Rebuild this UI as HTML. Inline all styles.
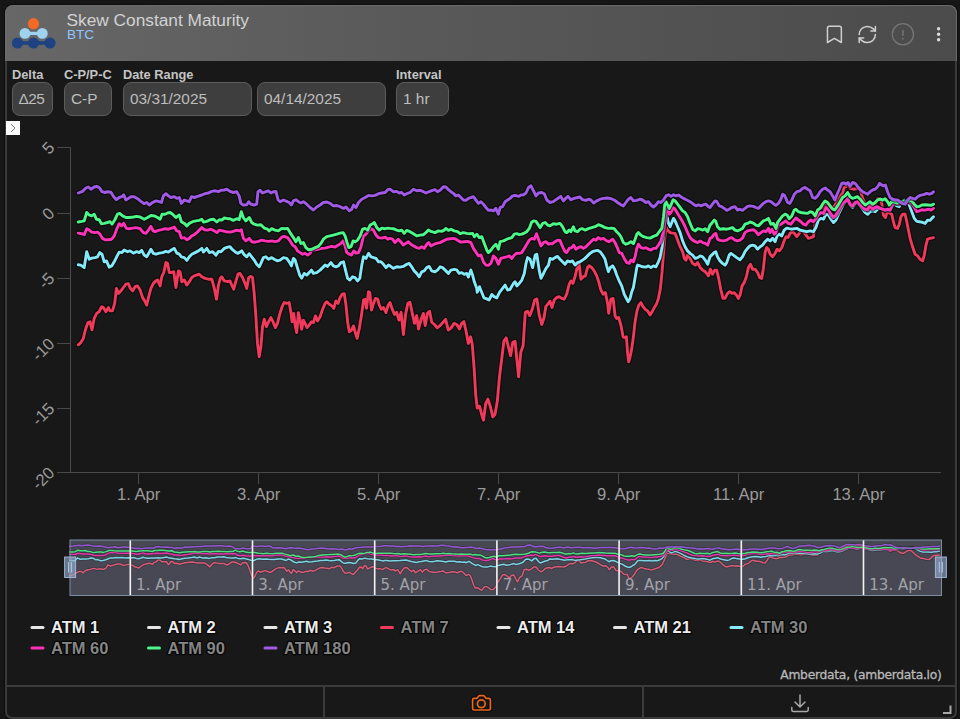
<!DOCTYPE html>
<html><head><meta charset="utf-8"><title>Skew Constant Maturity</title>
<style>
html,body{margin:0;padding:0;background:#161617;}
body{width:960px;height:719px;overflow:hidden;position:relative;font-family:"Liberation Sans",sans-serif;}
#panel{position:absolute;left:5px;top:5px;width:952px;height:714px;box-sizing:border-box;background:#181818;border:2px solid #3b3b3b;border-radius:8px 8px 7px 7px;box-shadow:0 0 0 1px #0c0c0c;}
#hdr{position:absolute;left:5px;top:5px;width:952px;height:55.6px;box-sizing:border-box;border-radius:8px 8px 0 0;border:1px solid #6c6c6c;border-bottom:none;background:linear-gradient(90deg,#676767 0%,#5a5a5a 40%,#4b4b4b 100%);}
#title{position:absolute;left:66.5px;top:10.2px;font-size:17.3px;color:#d2d2d2;line-height:20px;white-space:nowrap;}
#sub{position:absolute;left:67px;top:27.3px;font-size:13.5px;color:#8fc6ff;line-height:15px;}
.lbl{position:absolute;top:67.6px;font-size:12.8px;font-weight:bold;color:#c4c4c4;line-height:14px;white-space:nowrap;}
.btn{position:absolute;top:82.2px;height:33.5px;box-sizing:border-box;background:#3e3e3e;border:1px solid #5c5c5c;border-radius:8px;color:#bdbdbd;font-size:15.4px;line-height:32.4px;padding-left:6px;white-space:nowrap;}
#tog{position:absolute;left:6px;top:121px;width:14px;height:14px;background:#fafafa;}
svg{position:absolute;left:0;top:0;}
.ax{font-family:"Liberation Sans",sans-serif;font-size:16.6px;fill:#9a9a9a;}
.nv{font-family:"DejaVu Sans","Liberation Sans",sans-serif;font-size:15px;fill:#a2a2a8;}
.lg{font-family:"Liberation Sans",sans-serif;font-size:16.5px;font-weight:bold;}
</style></head><body>
<div id="panel"></div>
<div id="hdr"></div>
<div id="title">Skew Constant Maturity</div>
<div id="sub">BTC</div>
<div class="lbl" style="left:12px">Delta</div>
<div class="lbl" style="left:64px">C-P/P-C</div>
<div class="lbl" style="left:123px">Date Range</div>
<div class="lbl" style="left:396px">Interval</div>
<div class="btn" style="left:12px;width:41px;padding-left:5.5px;letter-spacing:-0.5px">Δ25</div>
<div class="btn" style="left:64px;width:48px">C-P</div>
<div class="btn" style="left:123px;width:129px">03/31/2025</div>
<div class="btn" style="left:257px;width:129px">04/14/2025</div>
<div class="btn" style="left:396px;width:53px">1 hr</div>
<div id="tog"></div>
<svg width="960" height="719" viewBox="0 0 960 719">
<!-- logo -->
<g>
<circle cx="17.5" cy="43" r="5.6" fill="#1f4382"/><circle cx="33.5" cy="43" r="5.6" fill="#1f4382"/><circle cx="50" cy="43" r="5.6" fill="#1f4382"/>
<rect x="17" y="41.2" width="33" height="3.6" fill="#1f4382"/>
<circle cx="25" cy="33.4" r="5.4" fill="#9fd2ee"/><circle cx="42.3" cy="33.4" r="5.4" fill="#9fd2ee"/>
<rect x="25" y="31.8" width="17" height="3.2" fill="#9fd2ee"/>
<circle cx="33.5" cy="23.7" r="5.6" fill="#f26a25"/>
</g>
<!-- header icons -->
<g fill="none" stroke="#cfcfcf" stroke-width="1.5" stroke-linejoin="round" stroke-linecap="round">
<path d="M827.45 42.5 V28.2 a2 2 0 0 1 2 -2 h9.9 a2 2 0 0 1 2 2 V42.5 l-6.95 -4.2 z"/>
<g transform="translate(856.5,23.7) scale(0.9)" stroke-width="1.67">
<path d="M3 12a9 9 0 0 1 9-9 9.75 9.75 0 0 1 6.74 2.74L21 8"/><path d="M21 3v5h-5"/><path d="M21 12a9 9 0 0 1-9 9 9.75 9.75 0 0 1-6.74-2.74L3 16"/><path d="M8 16H3v5"/>
</g>
</g>
<circle cx="902.9" cy="34.3" r="10.6" fill="none" stroke="#757575" stroke-width="1.3"/>
<path d="M902.9 30.2 v5.6 M902.9 38.1 v1.3" stroke="#757575" stroke-width="1.6" fill="none"/>
<circle cx="938.6" cy="28.8" r="1.7" fill="#dcdcdc"/><circle cx="938.6" cy="34.3" r="1.7" fill="#dcdcdc"/><circle cx="938.6" cy="39.8" r="1.7" fill="#dcdcdc"/>
<!-- toggle chevron -->
<path d="M11 124.2 l4 3.9 l-4 3.9" fill="none" stroke="#777" stroke-width="1"/>
<!-- axes -->
<g stroke="#4a4a4a" stroke-width="1" fill="none" shape-rendering="crispEdges">
<path d="M70.5 147 V473"/>
<path d="M57 147.5 H70 M57 213.5 H70 M57 278.5 H70 M57 343.5 H70 M57 408.5 H70 M57 472.5 H941"/>
<path d="M138.5 473 v11 M258.5 473 v11 M378.5 473 v11 M498.5 473 v11 M618.5 473 v11 M738.5 473 v11 M858.5 473 v11"/>
</g>
<g class="ax" text-anchor="end">
<text transform="translate(55.5,148.7) rotate(-45)">5</text>
<text transform="translate(55.5,214.5) rotate(-45)">0</text>
<text transform="translate(55.5,279.5) rotate(-45)">-5</text>
<text transform="translate(55.5,345.0) rotate(-45)">-10</text>
<text transform="translate(55.5,409.7) rotate(-45)">-15</text>
<text transform="translate(55.5,473.9) rotate(-45)">-20</text>
</g>
<g class="ax" text-anchor="middle">
<text x="138.7" y="499.5">1. Apr</text><text x="258.7" y="499.5">3. Apr</text><text x="378.7" y="499.5">5. Apr</text><text x="498.7" y="499.5">7. Apr</text><text x="618.7" y="499.5">9. Apr</text><text x="738.7" y="499.5">11. Apr</text><text x="858.7" y="499.5">13. Apr</text>
</g>
<!-- main series -->
<path d="M78.3 344.8 L80.8 342.6 L83.3 338.4 L85.8 328.4 L88.0 322.6 L90.0 321.8 L92.0 329.8 L94.2 318.4 L96.7 313.4 L99.2 311.7 L101.7 306.7 L103.4 307.6 L105.9 311.7 L108.4 307.6 L110.0 310.9 L112.5 310.9 L114.7 303.4 L116.4 288.4 L118.4 293.4 L120.9 290.9 L123.4 287.5 L125.9 284.2 L128.4 283.7 L130.4 288.4 L132.6 290.9 L135.1 286.7 L137.6 285.9 L140.1 290.1 L142.6 297.6 L144.7 300.9 L146.7 305.1 L148.7 296.7 L150.9 288.4 L153.4 283.4 L155.9 280.9 L157.6 280.0 L160.1 285.9 L161.8 276.7 L163.8 272.5 L165.9 262.5 L167.6 263.4 L169.3 272.5 L171.8 272.5 L173.8 271.7 L175.9 287.5 L178.4 270.9 L180.1 271.7 L181.8 281.7 L184.3 280.0 L186.8 285.0 L189.3 281.7 L191.8 277.5 L194.3 275.9 L196.8 275.0 L199.3 274.2 L201.8 276.7 L205.1 278.4 L208.5 279.2 L211.8 279.2 L214.3 288.4 L216.5 299.2 L218.5 285.0 L220.2 278.4 L221.8 276.7 L224.3 280.9 L227.7 281.7 L230.0 280.9 L231.7 285.0 L233.7 289.2 L235.8 281.7 L238.0 274.2 L240.0 273.4 L242.5 277.5 L245.0 283.4 L246.7 288.4 L248.7 277.5 L250.9 276.4 L252.5 277.5 L254.2 293.4 L255.9 316.7 L257.5 343.4 L259.2 356.8 L260.9 346.8 L262.5 326.7 L264.2 319.2 L266.4 326.7 L268.7 321.7 L270.9 317.6 L273.0 321.7 L275.4 327.6 L277.5 323.4 L279.7 314.2 L282.1 306.7 L284.2 302.6 L286.7 303.4 L289.2 302.6 L290.9 312.6 L292.1 321.7 L293.7 313.4 L295.4 326.7 L296.7 332.6 L298.4 312.6 L300.1 320.1 L301.7 329.2 L303.4 320.1 L305.1 323.4 L307.1 327.6 L309.2 325.1 L311.4 321.7 L313.4 322.6 L315.4 315.9 L317.6 320.9 L320.1 316.7 L322.6 309.2 L325.1 303.4 L326.8 301.7 L329.3 304.2 L331.8 305.9 L333.8 308.4 L335.9 300.9 L338.1 303.4 L340.1 297.5 L342.1 294.2 L344.3 293.7 L346.0 305.1 L347.6 321.7 L349.3 331.8 L351.5 330.1 L353.5 325.9 L355.5 333.4 L357.1 338.4 L359.3 328.4 L361.5 315.1 L363.5 300.1 L365.1 299.2 L366.5 308.4 L368.5 291.7 L369.8 292.5 L371.5 310.1 L373.5 303.4 L375.5 298.4 L377.7 299.2 L379.3 305.1 L381.5 309.2 L383.5 307.6 L386.0 312.6 L388.2 305.1 L390.0 302.6 L392.2 308.9 L394.5 314.5 L396.7 312.3 L398.9 320.1 L401.1 312.3 L403.4 334.5 L405.6 314.5 L407.8 303.4 L410.0 302.3 L412.3 313.4 L414.5 323.4 L416.7 315.6 L418.5 329.0 L421.2 319.0 L423.4 313.4 L425.2 325.6 L427.4 313.4 L429.6 311.2 L431.8 322.3 L434.5 324.5 L437.2 327.9 L440.1 325.6 L443.0 322.3 L445.6 319.4 L448.3 330.1 L451.2 327.9 L454.1 323.4 L456.8 324.5 L459.4 329.0 L461.7 323.4 L463.9 321.6 L466.1 331.2 L468.3 343.4 L470.6 336.8 L472.3 344.5 L474.1 367.9 L475.7 394.6 L477.2 408.0 L479.5 406.2 L481.7 414.6 L483.5 420.2 L485.7 403.5 L487.9 399.1 L490.1 405.7 L492.8 416.9 L495.0 414.6 L497.3 401.3 L499.5 376.8 L501.7 359.0 L503.9 341.2 L506.2 337.9 L508.4 346.8 L510.6 355.7 L512.8 342.3 L515.1 341.2 L516.8 359.0 L518.6 376.8 L520.8 352.3 L523.1 345.7 L525.3 312.3 L527.5 311.2 L529.7 315.6 L532.4 308.9 L534.6 300.0 L536.9 298.9 L539.1 314.5 L541.8 324.5 L544.0 317.8 L545.8 306.7 L548.4 303.4 L550.0 301.2 L552.0 307.6 L554.2 300.1 L556.7 297.5 L559.2 296.7 L561.7 298.4 L564.2 299.2 L566.7 294.2 L569.2 284.2 L570.9 280.9 L573.0 283.4 L575.0 276.7 L577.0 268.4 L579.2 264.2 L580.9 279.2 L583.4 276.7 L585.4 275.9 L587.5 267.5 L589.2 265.8 L591.7 267.5 L594.2 270.9 L596.7 275.9 L598.7 281.7 L600.9 290.0 L603.1 294.2 L605.4 292.5 L607.6 303.4 L608.7 313.4 L610.9 299.2 L613.1 298.4 L615.1 315.9 L616.7 318.4 L618.7 317.6 L620.9 325.1 L623.1 336.8 L625.1 337.6 L626.4 336.8 L627.6 353.4 L628.7 361.8 L630.1 356.8 L631.8 348.4 L633.4 336.8 L635.1 321.7 L636.8 311.7 L638.8 305.1 L640.9 302.6 L643.1 306.7 L645.1 309.2 L647.6 310.9 L650.1 315.1 L652.6 310.9 L654.8 306.7 L656.8 303.4 L658.4 298.4 L660.4 288.4 L662.1 271.7 L663.5 253.3 L664.8 238.4 L666.0 226.7 L667.6 230.1 L670.1 232.6 L672.6 233.1 L675.1 233.4 L677.6 240.1 L680.1 246.7 L682.6 251.7 L684.3 258.4 L686.0 260.1 L687.6 255.1 L690.1 258.4 L692.6 263.4 L695.2 265.1 L697.7 262.6 L700.2 267.6 L702.7 270.1 L705.2 271.8 L706.7 273.4 L708.4 275.9 L710.4 269.2 L712.5 274.2 L714.7 270.1 L716.7 270.1 L718.7 278.4 L720.9 290.1 L723.0 298.4 L725.0 298.4 L727.5 293.4 L729.7 291.7 L732.0 293.4 L734.2 292.6 L736.4 295.1 L738.4 298.4 L740.1 295.1 L742.1 285.9 L744.2 282.6 L746.4 276.7 L748.4 267.5 L750.4 264.2 L752.6 269.2 L755.1 269.2 L757.6 272.6 L759.7 277.6 L761.7 278.4 L763.4 268.4 L765.1 252.5 L766.7 247.5 L768.4 249.2 L770.1 254.2 L772.6 256.7 L775.1 253.4 L777.1 249.2 L779.3 250.9 L781.8 247.5 L783.8 241.7 L785.9 236.7 L788.1 237.5 L790.1 233.3 L792.1 231.7 L794.3 233.3 L796.8 236.7 L799.3 233.3 L801.4 230.0 L803.5 231.7 L806.0 235.0 L808.5 238.4 L811.0 237.5 L813.5 236.7 L814.8 225.0 L815.1 226.7 L816.8 218.4 L819.3 208.4 L820.9 206.7 L823.5 208.4 L826.0 205.0 L827.6 206.7 L830.1 208.4 L832.6 207.5 L835.1 205.0 L837.6 200.0 L840.1 195.9 L842.6 193.4 L844.0 187.5 L846.0 186.7 L847.6 183.3 L850.1 188.3 L853.5 189.2 L856.8 188.7 L859.3 188.0 L861.0 192.5 L862.7 198.4 L865.2 203.4 L867.7 207.5 L870.0 209.2 L872.6 208.4 L875.1 205.0 L877.6 198.4 L880.1 198.7 L881.8 203.4 L883.4 215.1 L885.4 217.6 L887.6 210.9 L890.1 213.4 L891.8 214.2 L893.4 221.7 L895.1 227.6 L897.6 228.4 L899.3 224.2 L900.9 216.7 L902.6 214.2 L905.1 214.2 L906.8 221.7 L908.4 230.1 L910.1 238.4 L912.6 246.8 L915.1 254.3 L917.6 255.9 L920.1 259.3 L922.6 260.9 L924.3 255.1 L926.0 245.1 L927.6 239.2 L930.1 238.4 L933.5 237.6" fill="none" stroke="#000" stroke-opacity=".55" stroke-width="5.2" stroke-linejoin="round" stroke-linecap="round"/>
<path d="M78.3 344.8 L80.8 342.6 L83.3 338.4 L85.8 328.4 L88.0 322.6 L90.0 321.8 L92.0 329.8 L94.2 318.4 L96.7 313.4 L99.2 311.7 L101.7 306.7 L103.4 307.6 L105.9 311.7 L108.4 307.6 L110.0 310.9 L112.5 310.9 L114.7 303.4 L116.4 288.4 L118.4 293.4 L120.9 290.9 L123.4 287.5 L125.9 284.2 L128.4 283.7 L130.4 288.4 L132.6 290.9 L135.1 286.7 L137.6 285.9 L140.1 290.1 L142.6 297.6 L144.7 300.9 L146.7 305.1 L148.7 296.7 L150.9 288.4 L153.4 283.4 L155.9 280.9 L157.6 280.0 L160.1 285.9 L161.8 276.7 L163.8 272.5 L165.9 262.5 L167.6 263.4 L169.3 272.5 L171.8 272.5 L173.8 271.7 L175.9 287.5 L178.4 270.9 L180.1 271.7 L181.8 281.7 L184.3 280.0 L186.8 285.0 L189.3 281.7 L191.8 277.5 L194.3 275.9 L196.8 275.0 L199.3 274.2 L201.8 276.7 L205.1 278.4 L208.5 279.2 L211.8 279.2 L214.3 288.4 L216.5 299.2 L218.5 285.0 L220.2 278.4 L221.8 276.7 L224.3 280.9 L227.7 281.7 L230.0 280.9 L231.7 285.0 L233.7 289.2 L235.8 281.7 L238.0 274.2 L240.0 273.4 L242.5 277.5 L245.0 283.4 L246.7 288.4 L248.7 277.5 L250.9 276.4 L252.5 277.5 L254.2 293.4 L255.9 316.7 L257.5 343.4 L259.2 356.8 L260.9 346.8 L262.5 326.7 L264.2 319.2 L266.4 326.7 L268.7 321.7 L270.9 317.6 L273.0 321.7 L275.4 327.6 L277.5 323.4 L279.7 314.2 L282.1 306.7 L284.2 302.6 L286.7 303.4 L289.2 302.6 L290.9 312.6 L292.1 321.7 L293.7 313.4 L295.4 326.7 L296.7 332.6 L298.4 312.6 L300.1 320.1 L301.7 329.2 L303.4 320.1 L305.1 323.4 L307.1 327.6 L309.2 325.1 L311.4 321.7 L313.4 322.6 L315.4 315.9 L317.6 320.9 L320.1 316.7 L322.6 309.2 L325.1 303.4 L326.8 301.7 L329.3 304.2 L331.8 305.9 L333.8 308.4 L335.9 300.9 L338.1 303.4 L340.1 297.5 L342.1 294.2 L344.3 293.7 L346.0 305.1 L347.6 321.7 L349.3 331.8 L351.5 330.1 L353.5 325.9 L355.5 333.4 L357.1 338.4 L359.3 328.4 L361.5 315.1 L363.5 300.1 L365.1 299.2 L366.5 308.4 L368.5 291.7 L369.8 292.5 L371.5 310.1 L373.5 303.4 L375.5 298.4 L377.7 299.2 L379.3 305.1 L381.5 309.2 L383.5 307.6 L386.0 312.6 L388.2 305.1 L390.0 302.6 L392.2 308.9 L394.5 314.5 L396.7 312.3 L398.9 320.1 L401.1 312.3 L403.4 334.5 L405.6 314.5 L407.8 303.4 L410.0 302.3 L412.3 313.4 L414.5 323.4 L416.7 315.6 L418.5 329.0 L421.2 319.0 L423.4 313.4 L425.2 325.6 L427.4 313.4 L429.6 311.2 L431.8 322.3 L434.5 324.5 L437.2 327.9 L440.1 325.6 L443.0 322.3 L445.6 319.4 L448.3 330.1 L451.2 327.9 L454.1 323.4 L456.8 324.5 L459.4 329.0 L461.7 323.4 L463.9 321.6 L466.1 331.2 L468.3 343.4 L470.6 336.8 L472.3 344.5 L474.1 367.9 L475.7 394.6 L477.2 408.0 L479.5 406.2 L481.7 414.6 L483.5 420.2 L485.7 403.5 L487.9 399.1 L490.1 405.7 L492.8 416.9 L495.0 414.6 L497.3 401.3 L499.5 376.8 L501.7 359.0 L503.9 341.2 L506.2 337.9 L508.4 346.8 L510.6 355.7 L512.8 342.3 L515.1 341.2 L516.8 359.0 L518.6 376.8 L520.8 352.3 L523.1 345.7 L525.3 312.3 L527.5 311.2 L529.7 315.6 L532.4 308.9 L534.6 300.0 L536.9 298.9 L539.1 314.5 L541.8 324.5 L544.0 317.8 L545.8 306.7 L548.4 303.4 L550.0 301.2 L552.0 307.6 L554.2 300.1 L556.7 297.5 L559.2 296.7 L561.7 298.4 L564.2 299.2 L566.7 294.2 L569.2 284.2 L570.9 280.9 L573.0 283.4 L575.0 276.7 L577.0 268.4 L579.2 264.2 L580.9 279.2 L583.4 276.7 L585.4 275.9 L587.5 267.5 L589.2 265.8 L591.7 267.5 L594.2 270.9 L596.7 275.9 L598.7 281.7 L600.9 290.0 L603.1 294.2 L605.4 292.5 L607.6 303.4 L608.7 313.4 L610.9 299.2 L613.1 298.4 L615.1 315.9 L616.7 318.4 L618.7 317.6 L620.9 325.1 L623.1 336.8 L625.1 337.6 L626.4 336.8 L627.6 353.4 L628.7 361.8 L630.1 356.8 L631.8 348.4 L633.4 336.8 L635.1 321.7 L636.8 311.7 L638.8 305.1 L640.9 302.6 L643.1 306.7 L645.1 309.2 L647.6 310.9 L650.1 315.1 L652.6 310.9 L654.8 306.7 L656.8 303.4 L658.4 298.4 L660.4 288.4 L662.1 271.7 L663.5 253.3 L664.8 238.4 L666.0 226.7 L667.6 230.1 L670.1 232.6 L672.6 233.1 L675.1 233.4 L677.6 240.1 L680.1 246.7 L682.6 251.7 L684.3 258.4 L686.0 260.1 L687.6 255.1 L690.1 258.4 L692.6 263.4 L695.2 265.1 L697.7 262.6 L700.2 267.6 L702.7 270.1 L705.2 271.8 L706.7 273.4 L708.4 275.9 L710.4 269.2 L712.5 274.2 L714.7 270.1 L716.7 270.1 L718.7 278.4 L720.9 290.1 L723.0 298.4 L725.0 298.4 L727.5 293.4 L729.7 291.7 L732.0 293.4 L734.2 292.6 L736.4 295.1 L738.4 298.4 L740.1 295.1 L742.1 285.9 L744.2 282.6 L746.4 276.7 L748.4 267.5 L750.4 264.2 L752.6 269.2 L755.1 269.2 L757.6 272.6 L759.7 277.6 L761.7 278.4 L763.4 268.4 L765.1 252.5 L766.7 247.5 L768.4 249.2 L770.1 254.2 L772.6 256.7 L775.1 253.4 L777.1 249.2 L779.3 250.9 L781.8 247.5 L783.8 241.7 L785.9 236.7 L788.1 237.5 L790.1 233.3 L792.1 231.7 L794.3 233.3 L796.8 236.7 L799.3 233.3 L801.4 230.0 L803.5 231.7 L806.0 235.0 L808.5 238.4 L811.0 237.5 L813.5 236.7 L814.8 225.0 L815.1 226.7 L816.8 218.4 L819.3 208.4 L820.9 206.7 L823.5 208.4 L826.0 205.0 L827.6 206.7 L830.1 208.4 L832.6 207.5 L835.1 205.0 L837.6 200.0 L840.1 195.9 L842.6 193.4 L844.0 187.5 L846.0 186.7 L847.6 183.3 L850.1 188.3 L853.5 189.2 L856.8 188.7 L859.3 188.0 L861.0 192.5 L862.7 198.4 L865.2 203.4 L867.7 207.5 L870.0 209.2 L872.6 208.4 L875.1 205.0 L877.6 198.4 L880.1 198.7 L881.8 203.4 L883.4 215.1 L885.4 217.6 L887.6 210.9 L890.1 213.4 L891.8 214.2 L893.4 221.7 L895.1 227.6 L897.6 228.4 L899.3 224.2 L900.9 216.7 L902.6 214.2 L905.1 214.2 L906.8 221.7 L908.4 230.1 L910.1 238.4 L912.6 246.8 L915.1 254.3 L917.6 255.9 L920.1 259.3 L922.6 260.9 L924.3 255.1 L926.0 245.1 L927.6 239.2 L930.1 238.4 L933.5 237.6" fill="none" stroke="#ef3a5b" stroke-width="2.9" stroke-linejoin="round" stroke-linecap="round"/>
<path d="M78.3 264.8 L80.8 265.1 L84.2 267.6 L86.7 251.7 L89.2 259.3 L91.7 258.1 L95.0 257.6 L97.5 256.8 L99.7 252.6 L102.0 254.2 L104.2 261.8 L106.4 260.9 L109.2 267.1 L111.7 265.9 L114.2 261.8 L116.7 256.8 L119.2 252.1 L121.7 252.6 L124.2 250.1 L127.6 251.7 L130.1 250.9 L133.4 253.1 L136.7 251.7 L139.2 252.6 L141.7 250.4 L144.2 255.1 L146.7 256.8 L149.2 252.6 L150.9 249.2 L153.4 253.4 L155.9 254.2 L159.3 253.1 L162.6 252.6 L165.9 251.4 L168.4 252.1 L171.8 249.7 L174.3 248.4 L176.8 253.1 L179.3 254.2 L181.4 256.8 L184.3 257.6 L186.8 260.4 L189.3 256.8 L191.8 254.2 L195.1 252.6 L198.5 250.9 L201.8 248.4 L203.5 252.1 L206.8 248.4 L209.3 252.6 L212.6 251.7 L216.0 255.1 L218.5 251.4 L221.0 251.7 L224.3 248.4 L227.7 247.1 L230.0 246.7 L232.5 249.7 L235.0 251.7 L237.5 253.4 L240.0 252.1 L241.7 250.9 L244.2 254.7 L246.7 256.8 L249.2 253.7 L251.7 256.8 L254.2 260.1 L256.7 264.3 L259.2 266.8 L260.9 263.4 L263.4 257.6 L265.9 256.8 L268.4 259.3 L271.7 257.6 L274.2 259.3 L277.5 260.9 L280.1 260.1 L283.4 257.6 L286.7 258.4 L289.2 261.8 L291.4 265.9 L293.4 258.4 L295.1 260.1 L297.6 268.4 L299.7 275.1 L301.7 278.1 L304.2 273.4 L306.7 275.1 L309.2 272.6 L311.4 270.1 L313.4 273.4 L316.8 272.6 L320.1 270.1 L322.6 267.6 L325.1 265.1 L327.6 266.4 L330.9 262.6 L333.4 265.9 L335.9 266.8 L338.4 265.9 L340.9 262.6 L343.5 261.8 L345.5 270.1 L347.6 278.4 L349.8 280.1 L352.6 276.8 L355.1 277.6 L357.6 280.9 L359.8 278.4 L361.8 265.1 L363.5 256.8 L366.0 258.4 L368.5 253.4 L371.0 256.8 L373.5 257.6 L376.0 258.4 L378.5 261.8 L381.0 261.8 L383.5 264.3 L386.0 267.6 L388.5 265.1 L390.0 265.9 L393.3 268.4 L396.7 266.8 L400.0 267.1 L403.3 266.4 L406.7 264.3 L409.2 263.4 L411.7 266.8 L414.2 270.9 L416.7 273.4 L419.2 276.8 L421.7 271.8 L424.2 270.9 L426.7 267.6 L429.2 266.4 L431.7 270.9 L435.0 271.8 L437.5 270.1 L440.1 266.8 L442.6 267.6 L445.9 270.9 L448.4 273.4 L450.9 270.1 L454.2 269.3 L456.7 269.8 L459.2 273.4 L461.7 272.6 L464.2 274.3 L466.7 273.4 L468.4 277.1 L470.9 270.1 L472.6 275.1 L474.3 281.8 L476.8 288.5 L477.2 292.3 L479.5 286.7 L481.7 292.3 L483.9 297.8 L486.8 298.9 L489.0 300.0 L491.9 294.5 L494.1 296.7 L496.8 297.8 L499.5 292.3 L505.1 285.1 L507.6 290.1 L510.1 289.3 L513.5 283.4 L515.1 281.8 L516.8 285.9 L519.3 283.4 L521.8 280.1 L524.3 273.4 L526.0 263.4 L527.6 257.6 L530.1 259.3 L532.6 267.6 L535.2 255.1 L536.8 254.2 L539.3 270.9 L541.0 278.4 L543.5 273.4 L546.0 268.4 L548.5 265.1 L550.0 258.4 L552.5 259.3 L555.0 257.6 L557.5 256.4 L560.0 259.3 L562.5 261.8 L565.0 264.3 L567.5 260.9 L570.0 261.8 L572.5 260.9 L575.0 265.1 L577.5 262.6 L580.0 261.8 L582.5 260.1 L585.0 258.4 L587.5 255.9 L590.0 253.4 L592.5 251.7 L595.0 250.9 L597.5 250.4 L600.1 251.7 L602.6 255.1 L605.1 259.3 L606.7 265.8 L608.4 271.7 L610.4 267.5 L612.6 265.8 L614.7 269.2 L616.7 275.0 L619.2 280.9 L621.7 285.9 L624.2 294.2 L625.9 297.5 L628.1 301.7 L630.1 298.4 L631.8 291.7 L633.4 287.5 L635.1 277.5 L636.8 267.5 L637.6 265.1 L640.1 265.9 L642.6 266.8 L645.9 267.1 L648.4 265.9 L650.9 267.6 L653.4 265.9 L655.9 266.8 L658.4 261.8 L660.1 257.6 L662.1 246.7 L663.8 231.7 L665.5 216.7 L666.8 215.0 L668.5 223.4 L670.1 226.7 L671.8 222.5 L673.5 218.4 L675.1 220.9 L677.6 226.7 L680.1 232.6 L682.6 240.9 L685.1 246.7 L687.6 250.9 L690.1 253.4 L692.6 255.1 L695.2 258.4 L697.7 257.6 L700.2 255.9 L702.7 256.8 L705.2 260.1 L707.7 264.3 L710.0 256.8 L711.7 255.1 L714.2 252.6 L715.8 251.7 L717.5 256.8 L720.0 260.9 L722.5 263.4 L725.0 265.1 L726.7 262.6 L729.2 255.1 L730.9 253.4 L733.4 255.1 L736.7 257.6 L740.0 259.8 L742.5 256.8 L745.0 251.7 L747.5 248.4 L750.0 245.9 L752.5 245.1 L755.0 245.9 L757.5 249.2 L760.1 246.7 L762.6 245.1 L765.1 241.7 L767.6 239.2 L770.1 240.9 L772.6 238.4 L775.1 241.7 L777.1 235.9 L779.2 234.2 L781.7 235.9 L784.2 230.1 L786.7 228.1 L789.2 228.7 L791.8 229.2 L794.3 228.7 L796.8 228.4 L800.1 230.1 L803.4 230.9 L806.8 231.7 L810.1 230.9 L813.4 231.7 L815.9 227.6 L818.4 220.0 L820.9 218.4 L823.5 219.2 L826.0 214.2 L828.5 215.0 L831.0 219.2 L833.5 222.5 L836.0 220.0 L838.5 214.2 L841.0 209.2 L843.5 204.2 L846.0 200.9 L847.6 200.0 L850.1 205.0 L852.6 207.5 L855.2 203.4 L857.7 202.5 L860.2 205.9 L862.7 209.2 L865.2 212.5 L867.7 214.2 L870.0 211.7 L872.6 210.9 L875.1 211.7 L877.6 209.2 L880.1 208.4 L882.6 209.2 L885.1 210.1 L887.6 209.7 L890.1 210.1 L891.8 206.7 L894.3 203.4 L896.8 205.9 L899.3 206.7 L901.8 201.7 L904.3 200.0 L906.8 200.9 L909.3 205.0 L911.8 211.7 L914.3 218.4 L916.8 221.4 L919.3 221.7 L921.8 222.1 L925.1 223.4 L927.6 220.1 L930.1 220.4 L931.8 218.4 L933.5 216.7" fill="none" stroke="#000" stroke-opacity=".55" stroke-width="5.2" stroke-linejoin="round" stroke-linecap="round"/>
<path d="M78.3 264.8 L80.8 265.1 L84.2 267.6 L86.7 251.7 L89.2 259.3 L91.7 258.1 L95.0 257.6 L97.5 256.8 L99.7 252.6 L102.0 254.2 L104.2 261.8 L106.4 260.9 L109.2 267.1 L111.7 265.9 L114.2 261.8 L116.7 256.8 L119.2 252.1 L121.7 252.6 L124.2 250.1 L127.6 251.7 L130.1 250.9 L133.4 253.1 L136.7 251.7 L139.2 252.6 L141.7 250.4 L144.2 255.1 L146.7 256.8 L149.2 252.6 L150.9 249.2 L153.4 253.4 L155.9 254.2 L159.3 253.1 L162.6 252.6 L165.9 251.4 L168.4 252.1 L171.8 249.7 L174.3 248.4 L176.8 253.1 L179.3 254.2 L181.4 256.8 L184.3 257.6 L186.8 260.4 L189.3 256.8 L191.8 254.2 L195.1 252.6 L198.5 250.9 L201.8 248.4 L203.5 252.1 L206.8 248.4 L209.3 252.6 L212.6 251.7 L216.0 255.1 L218.5 251.4 L221.0 251.7 L224.3 248.4 L227.7 247.1 L230.0 246.7 L232.5 249.7 L235.0 251.7 L237.5 253.4 L240.0 252.1 L241.7 250.9 L244.2 254.7 L246.7 256.8 L249.2 253.7 L251.7 256.8 L254.2 260.1 L256.7 264.3 L259.2 266.8 L260.9 263.4 L263.4 257.6 L265.9 256.8 L268.4 259.3 L271.7 257.6 L274.2 259.3 L277.5 260.9 L280.1 260.1 L283.4 257.6 L286.7 258.4 L289.2 261.8 L291.4 265.9 L293.4 258.4 L295.1 260.1 L297.6 268.4 L299.7 275.1 L301.7 278.1 L304.2 273.4 L306.7 275.1 L309.2 272.6 L311.4 270.1 L313.4 273.4 L316.8 272.6 L320.1 270.1 L322.6 267.6 L325.1 265.1 L327.6 266.4 L330.9 262.6 L333.4 265.9 L335.9 266.8 L338.4 265.9 L340.9 262.6 L343.5 261.8 L345.5 270.1 L347.6 278.4 L349.8 280.1 L352.6 276.8 L355.1 277.6 L357.6 280.9 L359.8 278.4 L361.8 265.1 L363.5 256.8 L366.0 258.4 L368.5 253.4 L371.0 256.8 L373.5 257.6 L376.0 258.4 L378.5 261.8 L381.0 261.8 L383.5 264.3 L386.0 267.6 L388.5 265.1 L390.0 265.9 L393.3 268.4 L396.7 266.8 L400.0 267.1 L403.3 266.4 L406.7 264.3 L409.2 263.4 L411.7 266.8 L414.2 270.9 L416.7 273.4 L419.2 276.8 L421.7 271.8 L424.2 270.9 L426.7 267.6 L429.2 266.4 L431.7 270.9 L435.0 271.8 L437.5 270.1 L440.1 266.8 L442.6 267.6 L445.9 270.9 L448.4 273.4 L450.9 270.1 L454.2 269.3 L456.7 269.8 L459.2 273.4 L461.7 272.6 L464.2 274.3 L466.7 273.4 L468.4 277.1 L470.9 270.1 L472.6 275.1 L474.3 281.8 L476.8 288.5 L477.2 292.3 L479.5 286.7 L481.7 292.3 L483.9 297.8 L486.8 298.9 L489.0 300.0 L491.9 294.5 L494.1 296.7 L496.8 297.8 L499.5 292.3 L505.1 285.1 L507.6 290.1 L510.1 289.3 L513.5 283.4 L515.1 281.8 L516.8 285.9 L519.3 283.4 L521.8 280.1 L524.3 273.4 L526.0 263.4 L527.6 257.6 L530.1 259.3 L532.6 267.6 L535.2 255.1 L536.8 254.2 L539.3 270.9 L541.0 278.4 L543.5 273.4 L546.0 268.4 L548.5 265.1 L550.0 258.4 L552.5 259.3 L555.0 257.6 L557.5 256.4 L560.0 259.3 L562.5 261.8 L565.0 264.3 L567.5 260.9 L570.0 261.8 L572.5 260.9 L575.0 265.1 L577.5 262.6 L580.0 261.8 L582.5 260.1 L585.0 258.4 L587.5 255.9 L590.0 253.4 L592.5 251.7 L595.0 250.9 L597.5 250.4 L600.1 251.7 L602.6 255.1 L605.1 259.3 L606.7 265.8 L608.4 271.7 L610.4 267.5 L612.6 265.8 L614.7 269.2 L616.7 275.0 L619.2 280.9 L621.7 285.9 L624.2 294.2 L625.9 297.5 L628.1 301.7 L630.1 298.4 L631.8 291.7 L633.4 287.5 L635.1 277.5 L636.8 267.5 L637.6 265.1 L640.1 265.9 L642.6 266.8 L645.9 267.1 L648.4 265.9 L650.9 267.6 L653.4 265.9 L655.9 266.8 L658.4 261.8 L660.1 257.6 L662.1 246.7 L663.8 231.7 L665.5 216.7 L666.8 215.0 L668.5 223.4 L670.1 226.7 L671.8 222.5 L673.5 218.4 L675.1 220.9 L677.6 226.7 L680.1 232.6 L682.6 240.9 L685.1 246.7 L687.6 250.9 L690.1 253.4 L692.6 255.1 L695.2 258.4 L697.7 257.6 L700.2 255.9 L702.7 256.8 L705.2 260.1 L707.7 264.3 L710.0 256.8 L711.7 255.1 L714.2 252.6 L715.8 251.7 L717.5 256.8 L720.0 260.9 L722.5 263.4 L725.0 265.1 L726.7 262.6 L729.2 255.1 L730.9 253.4 L733.4 255.1 L736.7 257.6 L740.0 259.8 L742.5 256.8 L745.0 251.7 L747.5 248.4 L750.0 245.9 L752.5 245.1 L755.0 245.9 L757.5 249.2 L760.1 246.7 L762.6 245.1 L765.1 241.7 L767.6 239.2 L770.1 240.9 L772.6 238.4 L775.1 241.7 L777.1 235.9 L779.2 234.2 L781.7 235.9 L784.2 230.1 L786.7 228.1 L789.2 228.7 L791.8 229.2 L794.3 228.7 L796.8 228.4 L800.1 230.1 L803.4 230.9 L806.8 231.7 L810.1 230.9 L813.4 231.7 L815.9 227.6 L818.4 220.0 L820.9 218.4 L823.5 219.2 L826.0 214.2 L828.5 215.0 L831.0 219.2 L833.5 222.5 L836.0 220.0 L838.5 214.2 L841.0 209.2 L843.5 204.2 L846.0 200.9 L847.6 200.0 L850.1 205.0 L852.6 207.5 L855.2 203.4 L857.7 202.5 L860.2 205.9 L862.7 209.2 L865.2 212.5 L867.7 214.2 L870.0 211.7 L872.6 210.9 L875.1 211.7 L877.6 209.2 L880.1 208.4 L882.6 209.2 L885.1 210.1 L887.6 209.7 L890.1 210.1 L891.8 206.7 L894.3 203.4 L896.8 205.9 L899.3 206.7 L901.8 201.7 L904.3 200.0 L906.8 200.9 L909.3 205.0 L911.8 211.7 L914.3 218.4 L916.8 221.4 L919.3 221.7 L921.8 222.1 L925.1 223.4 L927.6 220.1 L930.1 220.4 L931.8 218.4 L933.5 216.7" fill="none" stroke="#84e9f9" stroke-width="2.9" stroke-linejoin="round" stroke-linecap="round"/>
<path d="M78.3 233.1 L81.7 233.7 L84.2 234.7 L86.7 228.7 L89.2 230.1 L91.7 232.1 L95.0 232.6 L97.5 232.1 L100.0 234.2 L102.5 238.4 L105.0 239.7 L108.4 239.7 L111.7 239.2 L114.2 235.9 L116.7 229.2 L119.2 223.7 L121.7 225.9 L123.7 223.4 L126.4 228.4 L129.2 228.7 L132.6 228.1 L135.9 227.6 L140.1 228.7 L143.4 232.6 L145.9 233.4 L148.4 230.1 L150.9 226.4 L153.1 230.9 L155.1 231.7 L158.4 230.4 L161.8 229.7 L165.1 228.7 L168.4 229.2 L171.8 228.1 L174.3 227.1 L176.8 230.9 L179.3 231.7 L181.4 238.1 L184.3 237.6 L186.8 239.7 L189.3 238.4 L191.8 235.9 L194.3 234.7 L196.8 232.6 L199.3 230.1 L201.8 227.6 L204.3 229.7 L207.6 230.1 L211.0 229.2 L214.3 230.9 L216.8 232.6 L219.3 230.1 L222.7 230.9 L226.0 231.7 L230.0 232.1 L233.3 231.4 L236.7 230.1 L239.2 230.9 L241.3 229.7 L243.3 238.1 L245.8 240.9 L249.2 238.4 L251.7 241.7 L255.0 242.2 L258.4 241.4 L261.7 240.1 L265.0 240.9 L268.4 241.4 L271.7 240.9 L275.0 241.7 L278.4 240.9 L281.7 237.1 L284.2 236.4 L287.6 237.6 L290.1 240.9 L292.6 245.1 L295.1 246.7 L297.6 250.9 L300.1 252.6 L302.6 254.2 L305.1 253.4 L307.6 255.1 L310.1 253.4 L311.8 250.1 L315.1 249.7 L318.4 249.2 L321.8 248.4 L325.1 248.1 L328.4 247.1 L331.8 246.4 L335.1 247.1 L338.4 245.1 L340.9 243.4 L343.1 240.9 L344.8 245.1 L346.8 252.6 L349.3 254.2 L351.5 255.1 L353.8 250.9 L356.0 253.1 L358.5 252.6 L361.0 246.7 L363.5 235.9 L366.0 234.2 L368.5 230.9 L371.0 228.4 L373.5 230.1 L376.0 235.1 L378.5 237.6 L381.8 238.1 L385.2 237.1 L387.7 239.2 L390.0 238.4 L392.5 239.2 L395.0 242.6 L398.3 239.2 L400.8 241.7 L403.3 245.1 L405.8 243.4 L408.4 241.7 L410.9 244.2 L413.4 245.9 L416.7 247.6 L419.2 248.4 L421.7 246.7 L424.2 248.4 L426.7 244.2 L428.7 242.6 L430.9 245.9 L434.2 244.2 L437.5 243.1 L440.1 242.6 L443.4 240.9 L446.7 239.2 L450.1 238.7 L453.4 238.4 L455.9 239.2 L458.4 240.9 L460.9 242.1 L464.2 241.7 L467.6 241.4 L470.9 242.6 L473.4 248.4 L475.9 252.1 L478.4 255.9 L480.9 255.1 L483.4 261.8 L485.9 265.1 L488.4 265.4 L490.9 263.4 L493.4 255.9 L495.9 258.4 L498.4 264.3 L500.9 258.4 L503.5 257.6 L506.8 256.8 L509.3 255.9 L511.8 258.4 L514.3 255.1 L516.8 253.1 L519.3 253.4 L521.8 252.6 L524.3 248.4 L526.8 244.2 L529.3 240.1 L531.8 238.4 L534.3 239.2 L536.5 233.7 L538.5 239.2 L541.0 245.9 L543.5 242.6 L546.0 241.7 L548.5 244.2 L550.0 243.7 L552.5 243.7 L555.0 241.7 L557.5 240.1 L560.0 240.4 L562.5 246.7 L565.0 251.7 L566.7 252.6 L569.2 248.4 L571.7 247.6 L573.7 245.1 L575.9 249.2 L578.4 247.6 L580.9 246.7 L583.4 248.4 L585.9 246.7 L588.4 244.2 L590.9 241.7 L593.4 239.2 L595.9 240.1 L598.4 237.6 L600.9 239.2 L603.4 238.4 L606.7 240.9 L609.2 241.7 L612.6 239.2 L615.1 242.6 L617.6 248.4 L619.2 252.6 L621.7 253.4 L624.2 258.4 L626.7 262.6 L629.2 263.4 L630.9 260.1 L633.4 261.8 L635.1 256.8 L636.8 248.4 L638.4 244.2 L640.9 247.6 L643.4 248.4 L645.9 247.6 L648.4 249.2 L650.9 250.1 L653.4 248.4 L655.9 248.4 L658.4 245.1 L660.9 240.9 L663.1 232.6 L664.8 221.7 L666.0 211.7 L667.6 208.4 L669.3 214.2 L671.0 212.5 L673.1 207.5 L675.1 209.2 L677.6 213.4 L680.1 217.5 L682.6 221.7 L685.1 226.7 L687.6 232.6 L690.1 237.6 L692.6 240.1 L695.2 241.7 L697.7 242.6 L700.2 240.9 L702.7 242.6 L705.2 243.4 L707.7 245.1 L710.0 238.4 L711.7 237.6 L714.2 234.2 L715.8 233.4 L717.5 239.2 L720.0 240.4 L723.3 240.9 L726.7 240.1 L729.2 238.4 L731.7 237.6 L735.0 240.1 L737.5 240.9 L740.0 240.1 L742.5 238.1 L745.0 232.6 L747.5 230.9 L750.9 230.1 L753.4 229.7 L755.9 231.7 L758.4 234.7 L760.9 232.6 L763.4 230.9 L765.9 231.7 L768.4 228.4 L770.1 232.6 L772.1 229.2 L774.2 234.2 L775.9 232.6 L778.4 225.1 L780.9 224.2 L783.4 222.5 L785.9 220.9 L788.4 223.4 L790.9 224.2 L793.4 220.9 L795.9 218.0 L798.4 220.0 L800.9 221.7 L803.4 224.2 L805.9 225.1 L808.4 221.7 L810.9 220.0 L813.4 221.7 L815.9 218.4 L818.4 215.0 L820.9 212.5 L823.5 213.4 L826.0 207.5 L828.5 210.0 L831.0 214.2 L833.5 217.5 L836.0 215.0 L838.5 210.0 L841.0 205.9 L843.5 202.5 L846.0 200.9 L847.6 198.4 L850.1 204.2 L852.6 205.9 L855.2 202.5 L857.7 201.7 L860.2 205.0 L862.7 207.5 L865.2 209.2 L867.7 210.0 L870.0 205.0 L872.6 209.2 L875.1 207.5 L877.6 206.7 L880.1 208.4 L882.6 209.2 L885.1 210.1 L887.6 209.2 L890.1 210.1 L891.8 205.9 L894.3 202.5 L896.8 203.4 L899.3 203.7 L901.8 203.0 L904.3 201.7 L906.8 201.4 L909.3 201.7 L911.8 203.4 L914.3 207.5 L916.8 211.7 L919.3 210.9 L921.8 209.7 L925.1 210.1 L928.5 209.2 L931.0 210.1 L933.5 208.4" fill="none" stroke="#000" stroke-opacity=".55" stroke-width="5.2" stroke-linejoin="round" stroke-linecap="round"/>
<path d="M78.3 233.1 L81.7 233.7 L84.2 234.7 L86.7 228.7 L89.2 230.1 L91.7 232.1 L95.0 232.6 L97.5 232.1 L100.0 234.2 L102.5 238.4 L105.0 239.7 L108.4 239.7 L111.7 239.2 L114.2 235.9 L116.7 229.2 L119.2 223.7 L121.7 225.9 L123.7 223.4 L126.4 228.4 L129.2 228.7 L132.6 228.1 L135.9 227.6 L140.1 228.7 L143.4 232.6 L145.9 233.4 L148.4 230.1 L150.9 226.4 L153.1 230.9 L155.1 231.7 L158.4 230.4 L161.8 229.7 L165.1 228.7 L168.4 229.2 L171.8 228.1 L174.3 227.1 L176.8 230.9 L179.3 231.7 L181.4 238.1 L184.3 237.6 L186.8 239.7 L189.3 238.4 L191.8 235.9 L194.3 234.7 L196.8 232.6 L199.3 230.1 L201.8 227.6 L204.3 229.7 L207.6 230.1 L211.0 229.2 L214.3 230.9 L216.8 232.6 L219.3 230.1 L222.7 230.9 L226.0 231.7 L230.0 232.1 L233.3 231.4 L236.7 230.1 L239.2 230.9 L241.3 229.7 L243.3 238.1 L245.8 240.9 L249.2 238.4 L251.7 241.7 L255.0 242.2 L258.4 241.4 L261.7 240.1 L265.0 240.9 L268.4 241.4 L271.7 240.9 L275.0 241.7 L278.4 240.9 L281.7 237.1 L284.2 236.4 L287.6 237.6 L290.1 240.9 L292.6 245.1 L295.1 246.7 L297.6 250.9 L300.1 252.6 L302.6 254.2 L305.1 253.4 L307.6 255.1 L310.1 253.4 L311.8 250.1 L315.1 249.7 L318.4 249.2 L321.8 248.4 L325.1 248.1 L328.4 247.1 L331.8 246.4 L335.1 247.1 L338.4 245.1 L340.9 243.4 L343.1 240.9 L344.8 245.1 L346.8 252.6 L349.3 254.2 L351.5 255.1 L353.8 250.9 L356.0 253.1 L358.5 252.6 L361.0 246.7 L363.5 235.9 L366.0 234.2 L368.5 230.9 L371.0 228.4 L373.5 230.1 L376.0 235.1 L378.5 237.6 L381.8 238.1 L385.2 237.1 L387.7 239.2 L390.0 238.4 L392.5 239.2 L395.0 242.6 L398.3 239.2 L400.8 241.7 L403.3 245.1 L405.8 243.4 L408.4 241.7 L410.9 244.2 L413.4 245.9 L416.7 247.6 L419.2 248.4 L421.7 246.7 L424.2 248.4 L426.7 244.2 L428.7 242.6 L430.9 245.9 L434.2 244.2 L437.5 243.1 L440.1 242.6 L443.4 240.9 L446.7 239.2 L450.1 238.7 L453.4 238.4 L455.9 239.2 L458.4 240.9 L460.9 242.1 L464.2 241.7 L467.6 241.4 L470.9 242.6 L473.4 248.4 L475.9 252.1 L478.4 255.9 L480.9 255.1 L483.4 261.8 L485.9 265.1 L488.4 265.4 L490.9 263.4 L493.4 255.9 L495.9 258.4 L498.4 264.3 L500.9 258.4 L503.5 257.6 L506.8 256.8 L509.3 255.9 L511.8 258.4 L514.3 255.1 L516.8 253.1 L519.3 253.4 L521.8 252.6 L524.3 248.4 L526.8 244.2 L529.3 240.1 L531.8 238.4 L534.3 239.2 L536.5 233.7 L538.5 239.2 L541.0 245.9 L543.5 242.6 L546.0 241.7 L548.5 244.2 L550.0 243.7 L552.5 243.7 L555.0 241.7 L557.5 240.1 L560.0 240.4 L562.5 246.7 L565.0 251.7 L566.7 252.6 L569.2 248.4 L571.7 247.6 L573.7 245.1 L575.9 249.2 L578.4 247.6 L580.9 246.7 L583.4 248.4 L585.9 246.7 L588.4 244.2 L590.9 241.7 L593.4 239.2 L595.9 240.1 L598.4 237.6 L600.9 239.2 L603.4 238.4 L606.7 240.9 L609.2 241.7 L612.6 239.2 L615.1 242.6 L617.6 248.4 L619.2 252.6 L621.7 253.4 L624.2 258.4 L626.7 262.6 L629.2 263.4 L630.9 260.1 L633.4 261.8 L635.1 256.8 L636.8 248.4 L638.4 244.2 L640.9 247.6 L643.4 248.4 L645.9 247.6 L648.4 249.2 L650.9 250.1 L653.4 248.4 L655.9 248.4 L658.4 245.1 L660.9 240.9 L663.1 232.6 L664.8 221.7 L666.0 211.7 L667.6 208.4 L669.3 214.2 L671.0 212.5 L673.1 207.5 L675.1 209.2 L677.6 213.4 L680.1 217.5 L682.6 221.7 L685.1 226.7 L687.6 232.6 L690.1 237.6 L692.6 240.1 L695.2 241.7 L697.7 242.6 L700.2 240.9 L702.7 242.6 L705.2 243.4 L707.7 245.1 L710.0 238.4 L711.7 237.6 L714.2 234.2 L715.8 233.4 L717.5 239.2 L720.0 240.4 L723.3 240.9 L726.7 240.1 L729.2 238.4 L731.7 237.6 L735.0 240.1 L737.5 240.9 L740.0 240.1 L742.5 238.1 L745.0 232.6 L747.5 230.9 L750.9 230.1 L753.4 229.7 L755.9 231.7 L758.4 234.7 L760.9 232.6 L763.4 230.9 L765.9 231.7 L768.4 228.4 L770.1 232.6 L772.1 229.2 L774.2 234.2 L775.9 232.6 L778.4 225.1 L780.9 224.2 L783.4 222.5 L785.9 220.9 L788.4 223.4 L790.9 224.2 L793.4 220.9 L795.9 218.0 L798.4 220.0 L800.9 221.7 L803.4 224.2 L805.9 225.1 L808.4 221.7 L810.9 220.0 L813.4 221.7 L815.9 218.4 L818.4 215.0 L820.9 212.5 L823.5 213.4 L826.0 207.5 L828.5 210.0 L831.0 214.2 L833.5 217.5 L836.0 215.0 L838.5 210.0 L841.0 205.9 L843.5 202.5 L846.0 200.9 L847.6 198.4 L850.1 204.2 L852.6 205.9 L855.2 202.5 L857.7 201.7 L860.2 205.0 L862.7 207.5 L865.2 209.2 L867.7 210.0 L870.0 205.0 L872.6 209.2 L875.1 207.5 L877.6 206.7 L880.1 208.4 L882.6 209.2 L885.1 210.1 L887.6 209.2 L890.1 210.1 L891.8 205.9 L894.3 202.5 L896.8 203.4 L899.3 203.7 L901.8 203.0 L904.3 201.7 L906.8 201.4 L909.3 201.7 L911.8 203.4 L914.3 207.5 L916.8 211.7 L919.3 210.9 L921.8 209.7 L925.1 210.1 L928.5 209.2 L931.0 210.1 L933.5 208.4" fill="none" stroke="#ff33b8" stroke-width="2.9" stroke-linejoin="round" stroke-linecap="round"/>
<path d="M78.3 222.0 L81.7 221.4 L84.2 220.9 L86.7 212.5 L89.2 215.0 L91.7 215.9 L94.2 214.2 L96.4 219.2 L99.2 219.7 L101.4 223.7 L104.2 223.4 L107.5 222.5 L110.0 221.7 L112.0 224.2 L114.7 220.0 L117.5 214.2 L119.7 213.4 L122.6 215.9 L125.9 217.5 L129.2 217.5 L133.4 217.0 L136.7 216.4 L140.1 217.0 L144.2 219.2 L147.6 217.5 L150.9 215.5 L154.3 215.9 L157.6 217.5 L160.1 219.2 L162.1 214.2 L165.1 214.2 L167.6 213.0 L170.1 212.5 L172.6 214.2 L175.9 217.5 L179.3 215.0 L181.4 221.7 L184.3 223.4 L186.8 225.9 L189.3 223.4 L192.6 221.7 L196.0 220.9 L199.3 220.4 L201.8 219.2 L203.5 222.0 L206.8 221.4 L210.1 219.7 L213.5 219.2 L216.8 222.0 L219.3 219.7 L221.8 220.0 L224.3 218.0 L227.7 218.7 L230.0 218.7 L233.3 220.4 L236.7 218.7 L239.2 219.7 L241.3 211.7 L243.3 217.5 L245.8 220.9 L249.2 217.5 L251.7 222.5 L254.2 224.2 L257.5 225.1 L260.9 224.7 L264.2 228.1 L267.5 229.2 L269.2 230.9 L271.7 228.7 L275.0 230.1 L278.4 230.9 L281.7 228.4 L285.1 228.7 L287.6 228.4 L290.1 232.6 L293.4 237.6 L295.9 241.7 L298.4 237.6 L300.9 243.4 L303.4 242.6 L305.9 247.6 L308.4 249.7 L311.8 249.2 L315.1 247.6 L318.4 246.4 L320.9 243.4 L323.4 239.2 L326.8 236.7 L330.1 235.9 L333.4 235.1 L336.8 234.2 L340.1 233.1 L343.1 232.6 L345.1 235.9 L346.8 241.7 L348.8 247.6 L351.0 246.7 L353.1 240.9 L355.1 241.7 L357.6 240.1 L360.1 235.9 L362.6 229.2 L365.1 228.4 L367.6 230.1 L370.1 225.1 L372.6 223.7 L374.3 222.5 L376.8 227.6 L379.3 230.1 L381.8 228.1 L385.2 228.7 L387.7 228.1 L390.0 228.4 L393.3 228.7 L396.7 230.1 L399.2 230.9 L401.7 230.1 L404.2 233.4 L406.7 230.4 L410.0 231.7 L413.4 233.7 L416.7 235.9 L420.0 235.1 L423.4 234.7 L425.9 232.6 L428.4 230.1 L431.7 231.7 L435.0 232.6 L438.4 230.9 L441.7 231.4 L444.2 230.1 L445.9 228.4 L448.4 230.4 L450.9 229.2 L454.2 230.9 L457.6 231.7 L460.1 233.7 L463.4 232.6 L466.7 233.4 L470.1 233.7 L472.6 233.4 L474.3 236.7 L476.8 234.2 L479.3 237.6 L481.8 236.7 L484.3 243.4 L486.8 250.1 L488.4 252.6 L490.9 250.1 L493.4 246.7 L495.9 244.2 L498.4 249.2 L500.1 241.7 L503.5 240.9 L506.8 239.2 L509.3 238.4 L511.8 237.6 L514.3 234.2 L516.8 233.7 L519.3 234.7 L521.8 234.2 L524.3 233.1 L526.8 231.7 L529.3 228.4 L531.5 222.5 L533.5 220.9 L536.0 221.4 L538.5 225.1 L540.2 227.6 L542.7 223.4 L545.2 222.5 L547.7 225.1 L550.0 225.9 L553.3 223.7 L556.7 224.2 L560.0 223.4 L562.5 226.7 L565.0 231.7 L566.7 232.6 L569.2 230.1 L570.9 231.7 L573.4 226.7 L575.0 230.9 L577.5 231.7 L580.0 229.2 L582.5 228.7 L585.0 230.1 L588.4 228.7 L591.7 227.6 L595.0 226.7 L598.4 224.7 L601.7 225.9 L605.1 227.6 L608.4 228.4 L611.7 228.1 L614.2 228.7 L616.7 231.7 L619.2 234.2 L620.9 236.7 L623.4 242.6 L625.9 244.2 L628.4 243.4 L630.9 241.7 L633.4 243.7 L635.1 239.2 L636.8 234.2 L638.4 232.6 L640.9 235.1 L643.4 236.7 L646.8 237.6 L650.1 238.1 L653.4 236.4 L656.8 235.1 L659.3 231.7 L661.8 228.4 L663.5 216.7 L664.8 204.2 L666.0 201.7 L667.6 205.0 L669.3 208.4 L671.0 205.0 L673.1 199.7 L675.1 200.9 L677.6 204.2 L680.1 207.5 L682.6 210.9 L685.1 212.5 L687.6 216.7 L690.1 223.4 L692.6 229.2 L695.2 230.9 L697.7 228.7 L700.2 229.2 L702.7 230.1 L705.2 228.7 L707.7 231.7 L710.0 225.1 L711.7 223.4 L714.2 220.0 L715.8 221.4 L717.5 226.7 L720.0 229.2 L723.3 228.7 L726.7 229.2 L730.0 228.4 L732.5 227.6 L735.0 230.1 L737.5 230.9 L740.0 229.7 L742.5 228.4 L745.0 224.2 L747.5 223.4 L750.0 222.0 L753.4 223.1 L755.9 225.1 L758.4 225.9 L760.9 223.4 L763.4 220.9 L765.9 220.0 L768.4 218.4 L770.9 224.2 L773.4 223.4 L775.9 228.4 L777.6 222.5 L780.1 219.2 L782.6 215.9 L785.1 214.2 L787.1 215.0 L789.2 218.7 L791.8 215.9 L794.3 210.0 L795.9 209.2 L798.4 211.7 L800.9 212.5 L804.3 213.0 L807.6 213.4 L810.1 211.7 L812.6 212.5 L815.1 215.9 L817.6 210.0 L820.1 208.4 L822.6 204.2 L825.1 200.9 L827.6 202.5 L830.1 205.9 L832.6 209.2 L834.8 210.0 L837.6 205.9 L840.1 201.7 L842.6 197.5 L845.1 195.9 L847.6 192.5 L850.1 196.7 L852.6 198.4 L855.2 197.5 L857.7 196.7 L860.2 199.2 L862.7 202.5 L865.2 205.0 L867.7 203.4 L870.0 201.7 L872.6 204.2 L875.1 202.5 L877.6 200.0 L880.1 199.2 L882.6 200.0 L885.1 198.7 L887.6 201.7 L889.3 205.0 L891.8 201.4 L894.3 202.0 L896.8 203.0 L899.3 202.5 L901.8 201.7 L904.3 200.9 L906.8 201.7 L909.3 200.9 L911.8 200.9 L914.3 204.2 L916.8 206.7 L919.3 206.4 L921.8 205.0 L925.1 204.7 L928.5 205.0 L931.0 205.4 L933.5 204.2" fill="none" stroke="#000" stroke-opacity=".55" stroke-width="5.2" stroke-linejoin="round" stroke-linecap="round"/>
<path d="M78.3 222.0 L81.7 221.4 L84.2 220.9 L86.7 212.5 L89.2 215.0 L91.7 215.9 L94.2 214.2 L96.4 219.2 L99.2 219.7 L101.4 223.7 L104.2 223.4 L107.5 222.5 L110.0 221.7 L112.0 224.2 L114.7 220.0 L117.5 214.2 L119.7 213.4 L122.6 215.9 L125.9 217.5 L129.2 217.5 L133.4 217.0 L136.7 216.4 L140.1 217.0 L144.2 219.2 L147.6 217.5 L150.9 215.5 L154.3 215.9 L157.6 217.5 L160.1 219.2 L162.1 214.2 L165.1 214.2 L167.6 213.0 L170.1 212.5 L172.6 214.2 L175.9 217.5 L179.3 215.0 L181.4 221.7 L184.3 223.4 L186.8 225.9 L189.3 223.4 L192.6 221.7 L196.0 220.9 L199.3 220.4 L201.8 219.2 L203.5 222.0 L206.8 221.4 L210.1 219.7 L213.5 219.2 L216.8 222.0 L219.3 219.7 L221.8 220.0 L224.3 218.0 L227.7 218.7 L230.0 218.7 L233.3 220.4 L236.7 218.7 L239.2 219.7 L241.3 211.7 L243.3 217.5 L245.8 220.9 L249.2 217.5 L251.7 222.5 L254.2 224.2 L257.5 225.1 L260.9 224.7 L264.2 228.1 L267.5 229.2 L269.2 230.9 L271.7 228.7 L275.0 230.1 L278.4 230.9 L281.7 228.4 L285.1 228.7 L287.6 228.4 L290.1 232.6 L293.4 237.6 L295.9 241.7 L298.4 237.6 L300.9 243.4 L303.4 242.6 L305.9 247.6 L308.4 249.7 L311.8 249.2 L315.1 247.6 L318.4 246.4 L320.9 243.4 L323.4 239.2 L326.8 236.7 L330.1 235.9 L333.4 235.1 L336.8 234.2 L340.1 233.1 L343.1 232.6 L345.1 235.9 L346.8 241.7 L348.8 247.6 L351.0 246.7 L353.1 240.9 L355.1 241.7 L357.6 240.1 L360.1 235.9 L362.6 229.2 L365.1 228.4 L367.6 230.1 L370.1 225.1 L372.6 223.7 L374.3 222.5 L376.8 227.6 L379.3 230.1 L381.8 228.1 L385.2 228.7 L387.7 228.1 L390.0 228.4 L393.3 228.7 L396.7 230.1 L399.2 230.9 L401.7 230.1 L404.2 233.4 L406.7 230.4 L410.0 231.7 L413.4 233.7 L416.7 235.9 L420.0 235.1 L423.4 234.7 L425.9 232.6 L428.4 230.1 L431.7 231.7 L435.0 232.6 L438.4 230.9 L441.7 231.4 L444.2 230.1 L445.9 228.4 L448.4 230.4 L450.9 229.2 L454.2 230.9 L457.6 231.7 L460.1 233.7 L463.4 232.6 L466.7 233.4 L470.1 233.7 L472.6 233.4 L474.3 236.7 L476.8 234.2 L479.3 237.6 L481.8 236.7 L484.3 243.4 L486.8 250.1 L488.4 252.6 L490.9 250.1 L493.4 246.7 L495.9 244.2 L498.4 249.2 L500.1 241.7 L503.5 240.9 L506.8 239.2 L509.3 238.4 L511.8 237.6 L514.3 234.2 L516.8 233.7 L519.3 234.7 L521.8 234.2 L524.3 233.1 L526.8 231.7 L529.3 228.4 L531.5 222.5 L533.5 220.9 L536.0 221.4 L538.5 225.1 L540.2 227.6 L542.7 223.4 L545.2 222.5 L547.7 225.1 L550.0 225.9 L553.3 223.7 L556.7 224.2 L560.0 223.4 L562.5 226.7 L565.0 231.7 L566.7 232.6 L569.2 230.1 L570.9 231.7 L573.4 226.7 L575.0 230.9 L577.5 231.7 L580.0 229.2 L582.5 228.7 L585.0 230.1 L588.4 228.7 L591.7 227.6 L595.0 226.7 L598.4 224.7 L601.7 225.9 L605.1 227.6 L608.4 228.4 L611.7 228.1 L614.2 228.7 L616.7 231.7 L619.2 234.2 L620.9 236.7 L623.4 242.6 L625.9 244.2 L628.4 243.4 L630.9 241.7 L633.4 243.7 L635.1 239.2 L636.8 234.2 L638.4 232.6 L640.9 235.1 L643.4 236.7 L646.8 237.6 L650.1 238.1 L653.4 236.4 L656.8 235.1 L659.3 231.7 L661.8 228.4 L663.5 216.7 L664.8 204.2 L666.0 201.7 L667.6 205.0 L669.3 208.4 L671.0 205.0 L673.1 199.7 L675.1 200.9 L677.6 204.2 L680.1 207.5 L682.6 210.9 L685.1 212.5 L687.6 216.7 L690.1 223.4 L692.6 229.2 L695.2 230.9 L697.7 228.7 L700.2 229.2 L702.7 230.1 L705.2 228.7 L707.7 231.7 L710.0 225.1 L711.7 223.4 L714.2 220.0 L715.8 221.4 L717.5 226.7 L720.0 229.2 L723.3 228.7 L726.7 229.2 L730.0 228.4 L732.5 227.6 L735.0 230.1 L737.5 230.9 L740.0 229.7 L742.5 228.4 L745.0 224.2 L747.5 223.4 L750.0 222.0 L753.4 223.1 L755.9 225.1 L758.4 225.9 L760.9 223.4 L763.4 220.9 L765.9 220.0 L768.4 218.4 L770.9 224.2 L773.4 223.4 L775.9 228.4 L777.6 222.5 L780.1 219.2 L782.6 215.9 L785.1 214.2 L787.1 215.0 L789.2 218.7 L791.8 215.9 L794.3 210.0 L795.9 209.2 L798.4 211.7 L800.9 212.5 L804.3 213.0 L807.6 213.4 L810.1 211.7 L812.6 212.5 L815.1 215.9 L817.6 210.0 L820.1 208.4 L822.6 204.2 L825.1 200.9 L827.6 202.5 L830.1 205.9 L832.6 209.2 L834.8 210.0 L837.6 205.9 L840.1 201.7 L842.6 197.5 L845.1 195.9 L847.6 192.5 L850.1 196.7 L852.6 198.4 L855.2 197.5 L857.7 196.7 L860.2 199.2 L862.7 202.5 L865.2 205.0 L867.7 203.4 L870.0 201.7 L872.6 204.2 L875.1 202.5 L877.6 200.0 L880.1 199.2 L882.6 200.0 L885.1 198.7 L887.6 201.7 L889.3 205.0 L891.8 201.4 L894.3 202.0 L896.8 203.0 L899.3 202.5 L901.8 201.7 L904.3 200.9 L906.8 201.7 L909.3 200.9 L911.8 200.9 L914.3 204.2 L916.8 206.7 L919.3 206.4 L921.8 205.0 L925.1 204.7 L928.5 205.0 L931.0 205.4 L933.5 204.2" fill="none" stroke="#4cf888" stroke-width="2.9" stroke-linejoin="round" stroke-linecap="round"/>
<path d="M78.3 193.0 L82.5 191.4 L85.8 188.0 L88.4 187.0 L90.9 189.2 L94.2 187.0 L96.7 186.3 L99.7 188.0 L102.0 191.7 L105.0 192.5 L107.5 191.7 L110.9 192.2 L113.7 196.7 L116.4 199.7 L119.2 197.5 L121.7 196.7 L123.7 194.7 L125.9 200.0 L128.4 198.4 L130.9 196.7 L134.2 196.7 L137.6 198.7 L140.9 201.4 L144.2 203.7 L146.7 202.5 L149.2 205.0 L152.6 202.5 L155.9 200.9 L158.4 201.4 L161.4 202.5 L163.4 195.9 L165.9 193.7 L168.4 195.9 L170.9 197.5 L174.3 196.7 L176.8 198.4 L179.3 197.5 L181.4 203.4 L184.3 200.0 L186.8 200.9 L189.3 201.7 L191.5 196.7 L194.3 197.5 L197.6 196.4 L201.8 195.0 L205.1 193.7 L208.5 193.0 L211.8 191.4 L215.2 190.8 L218.5 191.7 L221.0 190.3 L224.3 190.0 L226.8 189.2 L230.0 191.4 L233.3 192.5 L236.7 191.7 L239.2 195.9 L240.8 203.4 L243.3 205.0 L246.7 204.7 L248.7 201.7 L250.9 204.2 L254.2 205.0 L256.7 204.2 L258.0 191.7 L260.0 190.3 L262.5 193.0 L265.9 191.7 L268.4 190.8 L270.9 193.0 L273.4 191.7 L275.9 191.4 L278.1 200.0 L280.1 201.7 L283.4 200.0 L286.7 201.4 L289.2 202.5 L291.4 205.0 L293.4 200.9 L295.9 199.7 L298.4 201.7 L300.9 203.0 L303.4 201.7 L306.7 204.2 L310.1 207.5 L313.4 210.0 L316.8 207.0 L320.1 205.0 L323.4 202.5 L326.8 202.0 L330.1 203.4 L333.4 205.9 L336.8 205.5 L340.1 206.7 L343.5 208.4 L346.0 207.0 L349.3 210.9 L351.8 209.2 L353.5 205.0 L356.0 207.5 L358.5 202.5 L361.8 199.2 L365.1 197.5 L368.5 195.4 L371.8 195.9 L375.2 195.4 L378.5 193.7 L381.8 193.0 L385.2 192.5 L387.7 189.7 L390.0 189.2 L393.3 191.7 L396.7 191.4 L399.2 193.0 L401.7 192.5 L404.2 195.0 L406.7 193.7 L410.0 192.5 L413.4 189.2 L416.7 190.8 L420.0 190.3 L423.4 191.7 L425.9 193.0 L429.2 191.7 L432.5 190.3 L435.0 189.7 L437.5 191.7 L440.1 190.3 L443.4 186.7 L445.9 187.0 L448.4 189.7 L450.9 191.7 L453.4 193.4 L455.9 195.9 L458.4 195.0 L460.9 197.5 L463.4 200.0 L465.9 200.4 L468.4 198.4 L470.9 197.5 L473.4 196.7 L475.9 200.0 L478.4 203.4 L480.9 201.7 L483.4 204.2 L485.9 207.5 L488.4 210.4 L490.9 210.0 L493.4 210.9 L495.9 208.4 L498.4 214.2 L500.1 207.5 L502.6 206.7 L505.1 201.7 L507.6 200.0 L510.1 198.4 L512.6 195.9 L515.1 195.4 L518.5 196.4 L521.0 195.0 L523.5 194.7 L526.0 193.0 L528.5 187.5 L531.0 185.8 L533.5 190.8 L536.0 195.9 L538.5 193.0 L541.8 192.5 L544.3 193.7 L546.8 200.0 L550.0 202.5 L553.3 201.7 L556.7 199.2 L559.2 197.5 L560.8 196.4 L563.3 200.9 L565.8 198.4 L568.0 196.4 L570.9 199.7 L574.2 198.4 L577.5 197.5 L580.0 197.0 L582.5 199.7 L585.9 200.4 L588.4 199.2 L590.9 200.0 L593.7 203.0 L596.7 200.9 L600.1 199.2 L603.4 198.4 L607.6 198.0 L610.9 198.7 L614.2 200.0 L617.6 202.5 L620.9 204.7 L623.4 205.9 L625.9 202.5 L628.4 199.2 L630.9 197.5 L633.4 200.9 L636.8 200.4 L640.1 199.2 L642.6 200.0 L645.9 202.5 L648.4 201.7 L650.9 205.0 L653.4 207.0 L655.9 205.0 L658.4 201.7 L660.9 202.5 L663.5 200.0 L666.0 195.9 L668.5 194.7 L671.0 196.4 L673.5 194.7 L676.0 195.9 L678.5 195.0 L681.0 196.7 L683.5 198.4 L686.8 200.0 L690.1 201.7 L693.5 204.2 L696.0 205.9 L698.5 204.7 L701.0 205.9 L703.5 204.7 L706.0 204.2 L708.5 206.7 L710.0 207.5 L712.5 204.2 L715.0 200.9 L716.7 201.4 L719.2 205.9 L721.7 206.7 L724.2 208.4 L726.7 210.4 L729.2 209.2 L731.7 207.5 L735.0 206.7 L737.5 210.0 L740.0 209.2 L742.5 210.4 L745.0 208.4 L747.5 206.4 L750.0 205.9 L753.4 206.4 L755.9 207.5 L758.4 208.4 L760.9 205.9 L763.4 203.4 L765.9 201.7 L768.4 200.9 L770.9 201.7 L773.4 203.7 L775.9 205.4 L778.4 203.4 L780.9 199.2 L782.6 194.2 L784.2 195.0 L785.9 198.4 L787.6 202.5 L789.7 203.4 L791.8 200.0 L794.3 194.2 L796.8 191.7 L800.1 190.8 L802.6 188.3 L805.1 187.5 L807.6 189.2 L810.1 190.8 L812.6 197.5 L815.1 198.4 L817.6 195.9 L820.1 191.7 L822.6 189.2 L825.1 188.0 L827.6 190.0 L830.1 191.7 L832.6 195.9 L834.8 200.0 L836.8 195.0 L839.3 189.2 L841.8 183.3 L844.3 183.0 L846.0 184.2 L848.1 182.5 L850.1 186.3 L852.6 182.5 L855.2 183.3 L857.7 186.7 L860.2 189.7 L862.7 191.7 L865.2 193.0 L867.7 194.2 L870.0 191.7 L872.6 190.0 L875.1 189.2 L877.6 186.7 L879.7 183.4 L881.8 185.0 L883.4 185.9 L885.4 185.0 L887.6 191.7 L890.1 197.5 L892.6 199.2 L895.1 200.0 L897.6 200.0 L900.1 201.7 L902.6 203.7 L905.1 204.2 L907.6 200.0 L910.1 197.5 L912.6 198.4 L915.1 199.2 L917.6 196.7 L920.1 195.4 L923.5 194.7 L926.8 193.4 L929.3 194.2 L931.8 193.4 L933.5 191.7" fill="none" stroke="#000" stroke-opacity=".55" stroke-width="5.2" stroke-linejoin="round" stroke-linecap="round"/>
<path d="M78.3 193.0 L82.5 191.4 L85.8 188.0 L88.4 187.0 L90.9 189.2 L94.2 187.0 L96.7 186.3 L99.7 188.0 L102.0 191.7 L105.0 192.5 L107.5 191.7 L110.9 192.2 L113.7 196.7 L116.4 199.7 L119.2 197.5 L121.7 196.7 L123.7 194.7 L125.9 200.0 L128.4 198.4 L130.9 196.7 L134.2 196.7 L137.6 198.7 L140.9 201.4 L144.2 203.7 L146.7 202.5 L149.2 205.0 L152.6 202.5 L155.9 200.9 L158.4 201.4 L161.4 202.5 L163.4 195.9 L165.9 193.7 L168.4 195.9 L170.9 197.5 L174.3 196.7 L176.8 198.4 L179.3 197.5 L181.4 203.4 L184.3 200.0 L186.8 200.9 L189.3 201.7 L191.5 196.7 L194.3 197.5 L197.6 196.4 L201.8 195.0 L205.1 193.7 L208.5 193.0 L211.8 191.4 L215.2 190.8 L218.5 191.7 L221.0 190.3 L224.3 190.0 L226.8 189.2 L230.0 191.4 L233.3 192.5 L236.7 191.7 L239.2 195.9 L240.8 203.4 L243.3 205.0 L246.7 204.7 L248.7 201.7 L250.9 204.2 L254.2 205.0 L256.7 204.2 L258.0 191.7 L260.0 190.3 L262.5 193.0 L265.9 191.7 L268.4 190.8 L270.9 193.0 L273.4 191.7 L275.9 191.4 L278.1 200.0 L280.1 201.7 L283.4 200.0 L286.7 201.4 L289.2 202.5 L291.4 205.0 L293.4 200.9 L295.9 199.7 L298.4 201.7 L300.9 203.0 L303.4 201.7 L306.7 204.2 L310.1 207.5 L313.4 210.0 L316.8 207.0 L320.1 205.0 L323.4 202.5 L326.8 202.0 L330.1 203.4 L333.4 205.9 L336.8 205.5 L340.1 206.7 L343.5 208.4 L346.0 207.0 L349.3 210.9 L351.8 209.2 L353.5 205.0 L356.0 207.5 L358.5 202.5 L361.8 199.2 L365.1 197.5 L368.5 195.4 L371.8 195.9 L375.2 195.4 L378.5 193.7 L381.8 193.0 L385.2 192.5 L387.7 189.7 L390.0 189.2 L393.3 191.7 L396.7 191.4 L399.2 193.0 L401.7 192.5 L404.2 195.0 L406.7 193.7 L410.0 192.5 L413.4 189.2 L416.7 190.8 L420.0 190.3 L423.4 191.7 L425.9 193.0 L429.2 191.7 L432.5 190.3 L435.0 189.7 L437.5 191.7 L440.1 190.3 L443.4 186.7 L445.9 187.0 L448.4 189.7 L450.9 191.7 L453.4 193.4 L455.9 195.9 L458.4 195.0 L460.9 197.5 L463.4 200.0 L465.9 200.4 L468.4 198.4 L470.9 197.5 L473.4 196.7 L475.9 200.0 L478.4 203.4 L480.9 201.7 L483.4 204.2 L485.9 207.5 L488.4 210.4 L490.9 210.0 L493.4 210.9 L495.9 208.4 L498.4 214.2 L500.1 207.5 L502.6 206.7 L505.1 201.7 L507.6 200.0 L510.1 198.4 L512.6 195.9 L515.1 195.4 L518.5 196.4 L521.0 195.0 L523.5 194.7 L526.0 193.0 L528.5 187.5 L531.0 185.8 L533.5 190.8 L536.0 195.9 L538.5 193.0 L541.8 192.5 L544.3 193.7 L546.8 200.0 L550.0 202.5 L553.3 201.7 L556.7 199.2 L559.2 197.5 L560.8 196.4 L563.3 200.9 L565.8 198.4 L568.0 196.4 L570.9 199.7 L574.2 198.4 L577.5 197.5 L580.0 197.0 L582.5 199.7 L585.9 200.4 L588.4 199.2 L590.9 200.0 L593.7 203.0 L596.7 200.9 L600.1 199.2 L603.4 198.4 L607.6 198.0 L610.9 198.7 L614.2 200.0 L617.6 202.5 L620.9 204.7 L623.4 205.9 L625.9 202.5 L628.4 199.2 L630.9 197.5 L633.4 200.9 L636.8 200.4 L640.1 199.2 L642.6 200.0 L645.9 202.5 L648.4 201.7 L650.9 205.0 L653.4 207.0 L655.9 205.0 L658.4 201.7 L660.9 202.5 L663.5 200.0 L666.0 195.9 L668.5 194.7 L671.0 196.4 L673.5 194.7 L676.0 195.9 L678.5 195.0 L681.0 196.7 L683.5 198.4 L686.8 200.0 L690.1 201.7 L693.5 204.2 L696.0 205.9 L698.5 204.7 L701.0 205.9 L703.5 204.7 L706.0 204.2 L708.5 206.7 L710.0 207.5 L712.5 204.2 L715.0 200.9 L716.7 201.4 L719.2 205.9 L721.7 206.7 L724.2 208.4 L726.7 210.4 L729.2 209.2 L731.7 207.5 L735.0 206.7 L737.5 210.0 L740.0 209.2 L742.5 210.4 L745.0 208.4 L747.5 206.4 L750.0 205.9 L753.4 206.4 L755.9 207.5 L758.4 208.4 L760.9 205.9 L763.4 203.4 L765.9 201.7 L768.4 200.9 L770.9 201.7 L773.4 203.7 L775.9 205.4 L778.4 203.4 L780.9 199.2 L782.6 194.2 L784.2 195.0 L785.9 198.4 L787.6 202.5 L789.7 203.4 L791.8 200.0 L794.3 194.2 L796.8 191.7 L800.1 190.8 L802.6 188.3 L805.1 187.5 L807.6 189.2 L810.1 190.8 L812.6 197.5 L815.1 198.4 L817.6 195.9 L820.1 191.7 L822.6 189.2 L825.1 188.0 L827.6 190.0 L830.1 191.7 L832.6 195.9 L834.8 200.0 L836.8 195.0 L839.3 189.2 L841.8 183.3 L844.3 183.0 L846.0 184.2 L848.1 182.5 L850.1 186.3 L852.6 182.5 L855.2 183.3 L857.7 186.7 L860.2 189.7 L862.7 191.7 L865.2 193.0 L867.7 194.2 L870.0 191.7 L872.6 190.0 L875.1 189.2 L877.6 186.7 L879.7 183.4 L881.8 185.0 L883.4 185.9 L885.4 185.0 L887.6 191.7 L890.1 197.5 L892.6 199.2 L895.1 200.0 L897.6 200.0 L900.1 201.7 L902.6 203.7 L905.1 204.2 L907.6 200.0 L910.1 197.5 L912.6 198.4 L915.1 199.2 L917.6 196.7 L920.1 195.4 L923.5 194.7 L926.8 193.4 L929.3 194.2 L931.8 193.4 L933.5 191.7" fill="none" stroke="#a05ae6" stroke-width="2.9" stroke-linejoin="round" stroke-linecap="round"/>

<!-- navigator -->
<rect x="70" y="540" width="871.5" height="55.5" fill="#181818"/>
<rect x="70" y="540" width="871.5" height="55.5" fill="#8a8ca8" fill-opacity=".42"/>
<g opacity=".88"><path d="M69.1 575.8 L71.6 575.4 L74.2 574.6 L76.7 572.6 L79.0 571.5 L81.0 571.4 L83.0 572.9 L85.3 570.7 L87.8 569.7 L90.4 569.4 L92.9 568.4 L94.7 568.6 L97.2 569.4 L99.7 568.6 L101.4 569.3 L103.9 569.3 L106.2 567.8 L107.9 564.9 L109.9 565.9 L112.5 565.4 L115.0 564.7 L117.6 564.1 L120.1 564.0 L122.1 564.9 L124.4 565.4 L126.9 564.6 L129.5 564.4 L132.0 565.2 L134.6 566.7 L136.7 567.3 L138.7 568.1 L140.8 566.5 L143.0 564.9 L145.6 563.9 L148.1 563.4 L149.8 563.3 L152.4 564.4 L154.1 562.6 L156.2 561.8 L158.3 559.9 L160.0 560.0 L161.8 561.8 L164.3 561.8 L166.3 561.7 L168.5 564.7 L171.0 561.5 L172.8 561.7 L174.5 563.6 L177.0 563.3 L179.6 564.2 L182.1 563.6 L184.7 562.8 L187.2 562.5 L189.8 562.3 L192.3 562.1 L194.9 562.6 L198.2 563.0 L201.7 563.1 L205.0 563.1 L207.6 564.9 L209.8 567.0 L211.9 564.2 L213.6 563.0 L215.2 562.6 L217.8 563.4 L221.2 563.6 L223.6 563.4 L225.3 564.2 L227.3 565.0 L229.5 563.6 L231.7 562.1 L233.8 562.0 L236.3 562.8 L238.8 563.9 L240.6 564.9 L242.6 562.8 L244.9 562.6 L246.5 562.8 L248.2 565.9 L249.9 570.4 L251.6 575.6 L253.3 578.2 L255.0 576.2 L256.7 572.3 L258.4 570.9 L260.6 572.3 L263.0 571.3 L265.2 570.6 L267.4 571.3 L269.8 572.5 L271.9 571.7 L274.2 569.9 L276.6 568.4 L278.8 567.6 L281.3 567.8 L283.9 567.6 L285.6 569.6 L286.8 571.3 L288.4 569.7 L290.2 572.3 L291.5 573.5 L293.2 569.6 L295.0 571.0 L296.6 572.8 L298.3 571.0 L300.1 571.7 L302.1 572.5 L304.2 572.0 L306.5 571.3 L308.5 571.5 L310.5 570.2 L312.8 571.2 L315.3 570.4 L317.9 568.9 L320.4 567.8 L322.1 567.5 L324.7 568.0 L327.2 568.3 L329.3 568.8 L331.4 567.3 L333.7 567.8 L335.7 566.7 L337.7 566.0 L340.0 565.9 L341.7 568.1 L343.3 571.3 L345.1 573.3 L347.3 573.0 L349.3 572.2 L351.4 573.6 L353.0 574.6 L355.2 572.6 L357.5 570.1 L359.5 567.2 L361.2 567.0 L362.6 568.8 L364.6 565.5 L365.9 565.7 L367.7 569.1 L369.7 567.8 L371.7 566.8 L374.0 567.0 L375.6 568.1 L377.9 568.9 L379.9 568.6 L382.4 569.6 L384.7 568.1 L386.5 567.6 L388.7 568.9 L391.1 570.0 L393.3 569.5 L395.6 571.0 L397.8 569.5 L400.2 573.8 L402.4 570.0 L404.6 567.8 L406.9 567.6 L409.2 569.7 L411.5 571.7 L413.7 570.2 L415.5 572.8 L418.3 570.8 L420.5 569.7 L422.4 572.1 L424.6 569.7 L426.8 569.3 L429.1 571.5 L431.8 571.9 L434.6 572.6 L437.5 572.1 L440.5 571.5 L443.1 570.9 L445.9 573.0 L448.8 572.6 L451.8 571.7 L454.5 571.9 L457.2 572.8 L459.5 571.7 L461.8 571.3 L464.0 573.2 L466.2 575.6 L468.6 574.3 L470.3 575.8 L472.1 580.3 L473.8 585.5 L475.3 588.1 L477.6 587.7 L479.9 589.4 L481.7 590.4 L484.0 587.2 L486.2 586.4 L488.4 587.6 L491.2 589.8 L493.4 589.4 L495.8 586.8 L498.0 582.0 L500.3 578.6 L502.5 575.1 L504.8 574.5 L507.1 576.2 L509.3 577.9 L511.6 575.3 L513.9 575.1 L515.6 578.6 L517.5 582.0 L519.7 577.3 L522.0 576.0 L524.3 569.5 L526.5 569.3 L528.8 570.2 L531.5 568.9 L533.8 567.1 L536.1 566.9 L538.3 570.0 L541.1 571.9 L543.3 570.6 L545.2 568.4 L547.8 567.8 L549.4 567.4 L551.5 568.6 L553.7 567.2 L556.3 566.7 L558.8 566.5 L561.4 566.8 L563.9 567.0 L566.4 566.0 L569.0 564.1 L570.7 563.4 L572.9 563.9 L574.9 562.6 L576.9 561.0 L579.2 560.2 L580.9 563.1 L583.5 562.6 L585.5 562.5 L587.6 560.8 L589.4 560.5 L591.9 560.8 L594.5 561.5 L597.0 562.5 L599.0 563.6 L601.3 565.2 L603.5 566.0 L605.9 565.7 L608.1 567.8 L609.2 569.7 L611.5 567.0 L613.7 566.8 L615.7 570.2 L617.4 570.7 L619.4 570.6 L621.6 572.0 L623.9 574.3 L625.9 574.4 L627.2 574.3 L628.5 577.5 L629.6 579.1 L631.0 578.2 L632.7 576.5 L634.4 574.3 L636.1 571.3 L637.8 569.4 L639.9 568.1 L642.0 567.6 L644.2 568.4 L646.3 568.9 L648.8 569.3 L651.4 570.1 L653.9 569.3 L656.2 568.4 L658.2 567.8 L659.8 566.8 L661.9 564.9 L663.6 561.7 L665.0 558.1 L666.3 555.2 L667.6 552.9 L669.2 553.6 L671.7 554.1 L674.3 554.2 L676.8 554.2 L679.4 555.5 L681.9 556.8 L684.5 557.8 L686.2 559.1 L687.9 559.4 L689.6 558.4 L692.1 559.1 L694.7 560.0 L697.3 560.4 L699.8 559.9 L702.4 560.9 L704.9 561.3 L707.5 561.7 L709.0 562.0 L710.7 562.5 L712.8 561.2 L714.9 562.1 L717.2 561.3 L719.2 561.3 L721.2 563.0 L723.5 565.2 L725.6 566.8 L727.6 566.8 L730.2 565.9 L732.4 565.5 L734.8 565.9 L737.0 565.7 L739.3 566.2 L741.3 566.8 L743.0 566.2 L745.1 564.4 L747.2 563.8 L749.4 562.6 L751.5 560.8 L753.5 560.2 L755.8 561.2 L758.3 561.2 L760.8 561.8 L763.0 562.8 L765.0 563.0 L766.8 561.0 L768.5 557.9 L770.1 557.0 L771.8 557.3 L773.6 558.3 L776.1 558.7 L778.7 558.1 L780.7 557.3 L782.9 557.6 L785.5 557.0 L787.5 555.8 L789.7 554.9 L791.9 555.0 L793.9 554.2 L796.0 553.9 L798.2 554.2 L800.8 554.9 L803.3 554.2 L805.4 553.6 L807.6 553.9 L810.1 554.5 L812.7 555.2 L815.2 555.0 L817.8 554.9 L819.1 552.6 L819.4 552.9 L821.1 551.3 L823.7 549.4 L825.3 549.1 L828.0 549.4 L830.5 548.7 L832.1 549.1 L834.7 549.4 L837.2 549.2 L839.8 548.7 L842.3 547.8 L844.9 547.0 L847.4 546.5 L848.8 545.3 L850.9 545.2 L852.5 544.5 L855.0 545.5 L858.5 545.7 L861.9 545.6 L864.4 545.4 L866.1 546.3 L867.9 547.4 L870.4 548.4 L873.0 549.2 L875.3 549.5 L878.0 549.4 L880.5 548.7 L883.0 547.4 L885.6 547.5 L887.3 548.4 L889.0 550.7 L891.0 551.2 L893.2 549.9 L895.8 550.4 L897.5 550.5 L899.1 552.0 L900.9 553.1 L903.4 553.3 L905.1 552.4 L906.8 551.0 L908.5 550.5 L911.1 550.5 L912.8 552.0 L914.4 553.6 L916.1 555.2 L918.7 556.8 L921.2 558.3 L923.8 558.6 L926.3 559.3 L928.9 559.6 L930.6 558.4 L932.3 556.5 L934.0 555.4 L936.5 555.2 L940.0 555.0" fill="none" stroke="#000" stroke-opacity=".3" stroke-width="3" stroke-linejoin="round"/>
<path d="M69.1 575.8 L71.6 575.4 L74.2 574.6 L76.7 572.6 L79.0 571.5 L81.0 571.4 L83.0 572.9 L85.3 570.7 L87.8 569.7 L90.4 569.4 L92.9 568.4 L94.7 568.6 L97.2 569.4 L99.7 568.6 L101.4 569.3 L103.9 569.3 L106.2 567.8 L107.9 564.9 L109.9 565.9 L112.5 565.4 L115.0 564.7 L117.6 564.1 L120.1 564.0 L122.1 564.9 L124.4 565.4 L126.9 564.6 L129.5 564.4 L132.0 565.2 L134.6 566.7 L136.7 567.3 L138.7 568.1 L140.8 566.5 L143.0 564.9 L145.6 563.9 L148.1 563.4 L149.8 563.3 L152.4 564.4 L154.1 562.6 L156.2 561.8 L158.3 559.9 L160.0 560.0 L161.8 561.8 L164.3 561.8 L166.3 561.7 L168.5 564.7 L171.0 561.5 L172.8 561.7 L174.5 563.6 L177.0 563.3 L179.6 564.2 L182.1 563.6 L184.7 562.8 L187.2 562.5 L189.8 562.3 L192.3 562.1 L194.9 562.6 L198.2 563.0 L201.7 563.1 L205.0 563.1 L207.6 564.9 L209.8 567.0 L211.9 564.2 L213.6 563.0 L215.2 562.6 L217.8 563.4 L221.2 563.6 L223.6 563.4 L225.3 564.2 L227.3 565.0 L229.5 563.6 L231.7 562.1 L233.8 562.0 L236.3 562.8 L238.8 563.9 L240.6 564.9 L242.6 562.8 L244.9 562.6 L246.5 562.8 L248.2 565.9 L249.9 570.4 L251.6 575.6 L253.3 578.2 L255.0 576.2 L256.7 572.3 L258.4 570.9 L260.6 572.3 L263.0 571.3 L265.2 570.6 L267.4 571.3 L269.8 572.5 L271.9 571.7 L274.2 569.9 L276.6 568.4 L278.8 567.6 L281.3 567.8 L283.9 567.6 L285.6 569.6 L286.8 571.3 L288.4 569.7 L290.2 572.3 L291.5 573.5 L293.2 569.6 L295.0 571.0 L296.6 572.8 L298.3 571.0 L300.1 571.7 L302.1 572.5 L304.2 572.0 L306.5 571.3 L308.5 571.5 L310.5 570.2 L312.8 571.2 L315.3 570.4 L317.9 568.9 L320.4 567.8 L322.1 567.5 L324.7 568.0 L327.2 568.3 L329.3 568.8 L331.4 567.3 L333.7 567.8 L335.7 566.7 L337.7 566.0 L340.0 565.9 L341.7 568.1 L343.3 571.3 L345.1 573.3 L347.3 573.0 L349.3 572.2 L351.4 573.6 L353.0 574.6 L355.2 572.6 L357.5 570.1 L359.5 567.2 L361.2 567.0 L362.6 568.8 L364.6 565.5 L365.9 565.7 L367.7 569.1 L369.7 567.8 L371.7 566.8 L374.0 567.0 L375.6 568.1 L377.9 568.9 L379.9 568.6 L382.4 569.6 L384.7 568.1 L386.5 567.6 L388.7 568.9 L391.1 570.0 L393.3 569.5 L395.6 571.0 L397.8 569.5 L400.2 573.8 L402.4 570.0 L404.6 567.8 L406.9 567.6 L409.2 569.7 L411.5 571.7 L413.7 570.2 L415.5 572.8 L418.3 570.8 L420.5 569.7 L422.4 572.1 L424.6 569.7 L426.8 569.3 L429.1 571.5 L431.8 571.9 L434.6 572.6 L437.5 572.1 L440.5 571.5 L443.1 570.9 L445.9 573.0 L448.8 572.6 L451.8 571.7 L454.5 571.9 L457.2 572.8 L459.5 571.7 L461.8 571.3 L464.0 573.2 L466.2 575.6 L468.6 574.3 L470.3 575.8 L472.1 580.3 L473.8 585.5 L475.3 588.1 L477.6 587.7 L479.9 589.4 L481.7 590.4 L484.0 587.2 L486.2 586.4 L488.4 587.6 L491.2 589.8 L493.4 589.4 L495.8 586.8 L498.0 582.0 L500.3 578.6 L502.5 575.1 L504.8 574.5 L507.1 576.2 L509.3 577.9 L511.6 575.3 L513.9 575.1 L515.6 578.6 L517.5 582.0 L519.7 577.3 L522.0 576.0 L524.3 569.5 L526.5 569.3 L528.8 570.2 L531.5 568.9 L533.8 567.1 L536.1 566.9 L538.3 570.0 L541.1 571.9 L543.3 570.6 L545.2 568.4 L547.8 567.8 L549.4 567.4 L551.5 568.6 L553.7 567.2 L556.3 566.7 L558.8 566.5 L561.4 566.8 L563.9 567.0 L566.4 566.0 L569.0 564.1 L570.7 563.4 L572.9 563.9 L574.9 562.6 L576.9 561.0 L579.2 560.2 L580.9 563.1 L583.5 562.6 L585.5 562.5 L587.6 560.8 L589.4 560.5 L591.9 560.8 L594.5 561.5 L597.0 562.5 L599.0 563.6 L601.3 565.2 L603.5 566.0 L605.9 565.7 L608.1 567.8 L609.2 569.7 L611.5 567.0 L613.7 566.8 L615.7 570.2 L617.4 570.7 L619.4 570.6 L621.6 572.0 L623.9 574.3 L625.9 574.4 L627.2 574.3 L628.5 577.5 L629.6 579.1 L631.0 578.2 L632.7 576.5 L634.4 574.3 L636.1 571.3 L637.8 569.4 L639.9 568.1 L642.0 567.6 L644.2 568.4 L646.3 568.9 L648.8 569.3 L651.4 570.1 L653.9 569.3 L656.2 568.4 L658.2 567.8 L659.8 566.8 L661.9 564.9 L663.6 561.7 L665.0 558.1 L666.3 555.2 L667.6 552.9 L669.2 553.6 L671.7 554.1 L674.3 554.2 L676.8 554.2 L679.4 555.5 L681.9 556.8 L684.5 557.8 L686.2 559.1 L687.9 559.4 L689.6 558.4 L692.1 559.1 L694.7 560.0 L697.3 560.4 L699.8 559.9 L702.4 560.9 L704.9 561.3 L707.5 561.7 L709.0 562.0 L710.7 562.5 L712.8 561.2 L714.9 562.1 L717.2 561.3 L719.2 561.3 L721.2 563.0 L723.5 565.2 L725.6 566.8 L727.6 566.8 L730.2 565.9 L732.4 565.5 L734.8 565.9 L737.0 565.7 L739.3 566.2 L741.3 566.8 L743.0 566.2 L745.1 564.4 L747.2 563.8 L749.4 562.6 L751.5 560.8 L753.5 560.2 L755.8 561.2 L758.3 561.2 L760.8 561.8 L763.0 562.8 L765.0 563.0 L766.8 561.0 L768.5 557.9 L770.1 557.0 L771.8 557.3 L773.6 558.3 L776.1 558.7 L778.7 558.1 L780.7 557.3 L782.9 557.6 L785.5 557.0 L787.5 555.8 L789.7 554.9 L791.9 555.0 L793.9 554.2 L796.0 553.9 L798.2 554.2 L800.8 554.9 L803.3 554.2 L805.4 553.6 L807.6 553.9 L810.1 554.5 L812.7 555.2 L815.2 555.0 L817.8 554.9 L819.1 552.6 L819.4 552.9 L821.1 551.3 L823.7 549.4 L825.3 549.1 L828.0 549.4 L830.5 548.7 L832.1 549.1 L834.7 549.4 L837.2 549.2 L839.8 548.7 L842.3 547.8 L844.9 547.0 L847.4 546.5 L848.8 545.3 L850.9 545.2 L852.5 544.5 L855.0 545.5 L858.5 545.7 L861.9 545.6 L864.4 545.4 L866.1 546.3 L867.9 547.4 L870.4 548.4 L873.0 549.2 L875.3 549.5 L878.0 549.4 L880.5 548.7 L883.0 547.4 L885.6 547.5 L887.3 548.4 L889.0 550.7 L891.0 551.2 L893.2 549.9 L895.8 550.4 L897.5 550.5 L899.1 552.0 L900.9 553.1 L903.4 553.3 L905.1 552.4 L906.8 551.0 L908.5 550.5 L911.1 550.5 L912.8 552.0 L914.4 553.6 L916.1 555.2 L918.7 556.8 L921.2 558.3 L923.8 558.6 L926.3 559.3 L928.9 559.6 L930.6 558.4 L932.3 556.5 L934.0 555.4 L936.5 555.2 L940.0 555.0" fill="none" stroke="#ee5f7c" stroke-width="1.5" stroke-linejoin="round"/>
<path d="M69.1 560.3 L71.6 560.4 L75.1 560.9 L77.6 557.8 L80.2 559.3 L82.7 559.0 L86.1 558.9 L88.6 558.8 L90.9 558.0 L93.2 558.3 L95.5 559.7 L97.7 559.6 L100.6 560.8 L103.1 560.5 L105.7 559.7 L108.2 558.8 L110.7 557.9 L113.3 558.0 L115.8 557.5 L119.3 557.8 L121.8 557.6 L125.2 558.1 L128.6 557.8 L131.1 558.0 L133.7 557.5 L136.2 558.4 L138.7 558.8 L141.3 558.0 L143.0 557.3 L145.6 558.1 L148.1 558.3 L151.6 558.1 L154.9 558.0 L158.3 557.7 L160.8 557.9 L164.3 557.4 L166.9 557.1 L169.4 558.1 L171.9 558.3 L174.1 558.8 L177.0 558.9 L179.6 559.5 L182.1 558.8 L184.7 558.3 L188.0 558.0 L191.5 557.6 L194.9 557.1 L196.6 557.9 L199.9 557.1 L202.5 558.0 L205.9 557.8 L209.3 558.4 L211.9 557.7 L214.4 557.8 L217.8 557.1 L221.2 556.9 L223.6 556.8 L226.1 557.4 L228.7 557.8 L231.2 558.1 L233.8 557.9 L235.5 557.6 L238.0 558.4 L240.6 558.8 L243.1 558.2 L245.7 558.8 L248.2 559.4 L250.8 560.2 L253.3 560.7 L255.0 560.0 L257.6 558.9 L260.1 558.8 L262.7 559.3 L266.0 558.9 L268.6 559.3 L271.9 559.6 L274.6 559.4 L278.0 558.9 L281.3 559.1 L283.9 559.7 L286.1 560.5 L288.1 559.1 L289.9 559.4 L292.4 561.0 L294.6 562.3 L296.6 562.9 L299.1 562.0 L301.7 562.3 L304.2 561.8 L306.5 561.3 L308.5 562.0 L312.0 561.8 L315.3 561.3 L317.9 560.9 L320.4 560.4 L323.0 560.6 L326.3 559.9 L328.9 560.5 L331.4 560.7 L334.0 560.5 L336.5 559.9 L339.2 559.7 L341.2 561.3 L343.3 563.0 L345.6 563.3 L348.4 562.6 L351.0 562.8 L353.5 563.4 L355.8 563.0 L357.8 560.4 L359.5 558.8 L362.1 559.1 L364.6 558.1 L367.2 558.8 L369.7 558.9 L372.3 559.1 L374.8 559.7 L377.3 559.7 L379.9 560.2 L382.4 560.9 L385.0 560.4 L386.5 560.5 L389.9 561.0 L393.3 560.7 L396.7 560.8 L400.1 560.6 L403.5 560.2 L406.1 560.0 L408.6 560.7 L411.2 561.5 L413.7 562.0 L416.2 562.6 L418.8 561.7 L421.3 561.5 L423.9 560.9 L426.4 560.6 L429.0 561.5 L432.3 561.7 L434.9 561.3 L437.5 560.7 L440.1 560.9 L443.4 561.5 L446.0 562.0 L448.5 561.3 L451.9 561.2 L454.4 561.3 L457.0 562.0 L459.5 561.8 L462.1 562.2 L464.6 562.0 L466.3 562.7 L468.9 561.3 L470.6 562.3 L472.4 563.6 L474.9 564.9 L475.3 565.6 L477.6 564.6 L479.9 565.6 L482.1 566.7 L485.1 566.9 L487.3 567.1 L490.3 566.1 L492.5 566.5 L495.3 566.7 L498.0 565.6 L503.7 564.3 L506.3 565.2 L508.8 565.1 L512.3 563.9 L513.9 563.6 L515.6 564.4 L518.2 563.9 L520.7 563.3 L523.3 562.0 L525.0 560.0 L526.6 558.9 L529.2 559.3 L531.7 560.9 L534.4 558.4 L536.0 558.3 L538.5 561.5 L540.3 563.0 L542.8 562.0 L545.4 561.0 L547.9 560.4 L549.4 559.1 L552.0 559.3 L554.5 558.9 L557.1 558.7 L559.6 559.3 L562.2 559.7 L564.7 560.2 L567.3 559.6 L569.8 559.7 L572.4 559.6 L574.9 560.4 L577.4 559.9 L580.0 559.7 L582.5 559.4 L585.1 559.1 L587.6 558.6 L590.2 558.1 L592.7 557.8 L595.3 557.6 L597.8 557.5 L600.5 557.8 L603.0 558.4 L605.6 559.3 L607.2 560.5 L608.9 561.7 L610.9 560.8 L613.2 560.5 L615.3 561.2 L617.4 562.3 L619.9 563.4 L622.5 564.4 L625.0 566.0 L626.7 566.7 L629.0 567.5 L631.0 566.8 L632.7 565.5 L634.4 564.7 L636.1 562.8 L637.8 560.8 L638.6 560.4 L641.2 560.5 L643.7 560.7 L647.1 560.8 L649.6 560.5 L652.2 560.9 L654.7 560.5 L657.3 560.7 L659.8 559.7 L661.6 558.9 L663.6 556.8 L665.3 553.9 L667.1 551.0 L668.4 550.7 L670.1 552.3 L671.7 552.9 L673.5 552.1 L675.2 551.3 L676.8 551.8 L679.4 552.9 L681.9 554.1 L684.5 555.7 L687.0 556.8 L689.6 557.6 L692.1 558.1 L694.7 558.4 L697.3 559.1 L699.8 558.9 L702.4 558.6 L704.9 558.8 L707.5 559.4 L710.0 560.2 L712.4 558.8 L714.1 558.4 L716.7 558.0 L718.3 557.8 L720.0 558.8 L722.6 559.6 L725.1 560.0 L727.6 560.4 L729.4 559.9 L731.9 558.4 L733.7 558.1 L736.2 558.4 L739.6 558.9 L742.9 559.3 L745.5 558.8 L748.0 557.8 L750.6 557.1 L753.1 556.7 L755.7 556.5 L758.2 556.7 L760.7 557.3 L763.4 556.8 L765.9 556.5 L768.5 555.8 L771.0 555.4 L773.6 555.7 L776.1 555.2 L778.7 555.8 L780.7 554.7 L782.8 554.4 L785.4 554.7 L787.9 553.6 L790.5 553.2 L793.0 553.3 L795.7 553.4 L798.2 553.3 L800.8 553.3 L804.1 553.6 L807.5 553.7 L810.9 553.9 L814.3 553.7 L817.7 553.9 L820.2 553.1 L822.8 551.6 L825.3 551.3 L828.0 551.5 L830.5 550.5 L833.0 550.7 L835.6 551.5 L838.1 552.1 L840.7 551.6 L843.2 550.5 L845.8 549.5 L848.3 548.6 L850.9 547.9 L852.5 547.8 L855.0 548.7 L857.6 549.2 L860.2 548.4 L862.8 548.2 L865.3 548.9 L867.9 549.5 L870.4 550.2 L873.0 550.5 L875.3 550.0 L878.0 549.9 L880.5 550.0 L883.0 549.5 L885.6 549.4 L888.1 549.5 L890.7 549.7 L893.2 549.6 L895.8 549.7 L897.5 549.1 L900.1 548.4 L902.6 548.9 L905.1 549.1 L907.7 548.1 L910.2 547.8 L912.8 547.9 L915.3 548.7 L917.9 550.0 L920.4 551.3 L923.0 551.9 L925.5 552.0 L928.1 552.0 L931.4 552.3 L934.0 551.7 L936.5 551.7 L938.2 551.3 L940.0 551.0" fill="none" stroke="#000" stroke-opacity=".3" stroke-width="3" stroke-linejoin="round"/>
<path d="M69.1 560.3 L71.6 560.4 L75.1 560.9 L77.6 557.8 L80.2 559.3 L82.7 559.0 L86.1 558.9 L88.6 558.8 L90.9 558.0 L93.2 558.3 L95.5 559.7 L97.7 559.6 L100.6 560.8 L103.1 560.5 L105.7 559.7 L108.2 558.8 L110.7 557.9 L113.3 558.0 L115.8 557.5 L119.3 557.8 L121.8 557.6 L125.2 558.1 L128.6 557.8 L131.1 558.0 L133.7 557.5 L136.2 558.4 L138.7 558.8 L141.3 558.0 L143.0 557.3 L145.6 558.1 L148.1 558.3 L151.6 558.1 L154.9 558.0 L158.3 557.7 L160.8 557.9 L164.3 557.4 L166.9 557.1 L169.4 558.1 L171.9 558.3 L174.1 558.8 L177.0 558.9 L179.6 559.5 L182.1 558.8 L184.7 558.3 L188.0 558.0 L191.5 557.6 L194.9 557.1 L196.6 557.9 L199.9 557.1 L202.5 558.0 L205.9 557.8 L209.3 558.4 L211.9 557.7 L214.4 557.8 L217.8 557.1 L221.2 556.9 L223.6 556.8 L226.1 557.4 L228.7 557.8 L231.2 558.1 L233.8 557.9 L235.5 557.6 L238.0 558.4 L240.6 558.8 L243.1 558.2 L245.7 558.8 L248.2 559.4 L250.8 560.2 L253.3 560.7 L255.0 560.0 L257.6 558.9 L260.1 558.8 L262.7 559.3 L266.0 558.9 L268.6 559.3 L271.9 559.6 L274.6 559.4 L278.0 558.9 L281.3 559.1 L283.9 559.7 L286.1 560.5 L288.1 559.1 L289.9 559.4 L292.4 561.0 L294.6 562.3 L296.6 562.9 L299.1 562.0 L301.7 562.3 L304.2 561.8 L306.5 561.3 L308.5 562.0 L312.0 561.8 L315.3 561.3 L317.9 560.9 L320.4 560.4 L323.0 560.6 L326.3 559.9 L328.9 560.5 L331.4 560.7 L334.0 560.5 L336.5 559.9 L339.2 559.7 L341.2 561.3 L343.3 563.0 L345.6 563.3 L348.4 562.6 L351.0 562.8 L353.5 563.4 L355.8 563.0 L357.8 560.4 L359.5 558.8 L362.1 559.1 L364.6 558.1 L367.2 558.8 L369.7 558.9 L372.3 559.1 L374.8 559.7 L377.3 559.7 L379.9 560.2 L382.4 560.9 L385.0 560.4 L386.5 560.5 L389.9 561.0 L393.3 560.7 L396.7 560.8 L400.1 560.6 L403.5 560.2 L406.1 560.0 L408.6 560.7 L411.2 561.5 L413.7 562.0 L416.2 562.6 L418.8 561.7 L421.3 561.5 L423.9 560.9 L426.4 560.6 L429.0 561.5 L432.3 561.7 L434.9 561.3 L437.5 560.7 L440.1 560.9 L443.4 561.5 L446.0 562.0 L448.5 561.3 L451.9 561.2 L454.4 561.3 L457.0 562.0 L459.5 561.8 L462.1 562.2 L464.6 562.0 L466.3 562.7 L468.9 561.3 L470.6 562.3 L472.4 563.6 L474.9 564.9 L475.3 565.6 L477.6 564.6 L479.9 565.6 L482.1 566.7 L485.1 566.9 L487.3 567.1 L490.3 566.1 L492.5 566.5 L495.3 566.7 L498.0 565.6 L503.7 564.3 L506.3 565.2 L508.8 565.1 L512.3 563.9 L513.9 563.6 L515.6 564.4 L518.2 563.9 L520.7 563.3 L523.3 562.0 L525.0 560.0 L526.6 558.9 L529.2 559.3 L531.7 560.9 L534.4 558.4 L536.0 558.3 L538.5 561.5 L540.3 563.0 L542.8 562.0 L545.4 561.0 L547.9 560.4 L549.4 559.1 L552.0 559.3 L554.5 558.9 L557.1 558.7 L559.6 559.3 L562.2 559.7 L564.7 560.2 L567.3 559.6 L569.8 559.7 L572.4 559.6 L574.9 560.4 L577.4 559.9 L580.0 559.7 L582.5 559.4 L585.1 559.1 L587.6 558.6 L590.2 558.1 L592.7 557.8 L595.3 557.6 L597.8 557.5 L600.5 557.8 L603.0 558.4 L605.6 559.3 L607.2 560.5 L608.9 561.7 L610.9 560.8 L613.2 560.5 L615.3 561.2 L617.4 562.3 L619.9 563.4 L622.5 564.4 L625.0 566.0 L626.7 566.7 L629.0 567.5 L631.0 566.8 L632.7 565.5 L634.4 564.7 L636.1 562.8 L637.8 560.8 L638.6 560.4 L641.2 560.5 L643.7 560.7 L647.1 560.8 L649.6 560.5 L652.2 560.9 L654.7 560.5 L657.3 560.7 L659.8 559.7 L661.6 558.9 L663.6 556.8 L665.3 553.9 L667.1 551.0 L668.4 550.7 L670.1 552.3 L671.7 552.9 L673.5 552.1 L675.2 551.3 L676.8 551.8 L679.4 552.9 L681.9 554.1 L684.5 555.7 L687.0 556.8 L689.6 557.6 L692.1 558.1 L694.7 558.4 L697.3 559.1 L699.8 558.9 L702.4 558.6 L704.9 558.8 L707.5 559.4 L710.0 560.2 L712.4 558.8 L714.1 558.4 L716.7 558.0 L718.3 557.8 L720.0 558.8 L722.6 559.6 L725.1 560.0 L727.6 560.4 L729.4 559.9 L731.9 558.4 L733.7 558.1 L736.2 558.4 L739.6 558.9 L742.9 559.3 L745.5 558.8 L748.0 557.8 L750.6 557.1 L753.1 556.7 L755.7 556.5 L758.2 556.7 L760.7 557.3 L763.4 556.8 L765.9 556.5 L768.5 555.8 L771.0 555.4 L773.6 555.7 L776.1 555.2 L778.7 555.8 L780.7 554.7 L782.8 554.4 L785.4 554.7 L787.9 553.6 L790.5 553.2 L793.0 553.3 L795.7 553.4 L798.2 553.3 L800.8 553.3 L804.1 553.6 L807.5 553.7 L810.9 553.9 L814.3 553.7 L817.7 553.9 L820.2 553.1 L822.8 551.6 L825.3 551.3 L828.0 551.5 L830.5 550.5 L833.0 550.7 L835.6 551.5 L838.1 552.1 L840.7 551.6 L843.2 550.5 L845.8 549.5 L848.3 548.6 L850.9 547.9 L852.5 547.8 L855.0 548.7 L857.6 549.2 L860.2 548.4 L862.8 548.2 L865.3 548.9 L867.9 549.5 L870.4 550.2 L873.0 550.5 L875.3 550.0 L878.0 549.9 L880.5 550.0 L883.0 549.5 L885.6 549.4 L888.1 549.5 L890.7 549.7 L893.2 549.6 L895.8 549.7 L897.5 549.1 L900.1 548.4 L902.6 548.9 L905.1 549.1 L907.7 548.1 L910.2 547.8 L912.8 547.9 L915.3 548.7 L917.9 550.0 L920.4 551.3 L923.0 551.9 L925.5 552.0 L928.1 552.0 L931.4 552.3 L934.0 551.7 L936.5 551.7 L938.2 551.3 L940.0 551.0" fill="none" stroke="#84e9f9" stroke-width="1.5" stroke-linejoin="round"/>
<path d="M69.1 554.2 L72.6 554.3 L75.1 554.5 L77.6 553.3 L80.2 553.6 L82.7 554.0 L86.1 554.1 L88.6 554.0 L91.2 554.4 L93.7 555.2 L96.3 555.5 L99.7 555.5 L103.1 555.4 L105.7 554.7 L108.2 553.4 L110.7 552.4 L113.3 552.8 L115.3 552.3 L118.1 553.3 L120.9 553.3 L124.4 553.2 L127.7 553.1 L132.0 553.3 L135.4 554.1 L137.9 554.2 L140.5 553.6 L143.0 552.9 L145.3 553.7 L147.3 553.9 L150.7 553.7 L154.1 553.5 L157.5 553.3 L160.8 553.4 L164.3 553.2 L166.9 553.0 L169.4 553.7 L171.9 553.9 L174.1 555.1 L177.0 555.0 L179.6 555.5 L182.1 555.2 L184.7 554.7 L187.2 554.5 L189.8 554.1 L192.3 553.6 L194.9 553.1 L197.4 553.5 L200.8 553.6 L204.2 553.4 L207.6 553.7 L210.1 554.1 L212.7 553.6 L216.1 553.7 L219.5 553.9 L223.6 554.0 L226.9 553.8 L230.4 553.6 L232.9 553.7 L235.1 553.5 L237.1 555.1 L239.7 555.7 L243.1 555.2 L245.7 555.8 L249.0 555.9 L252.5 555.8 L255.9 555.5 L259.2 555.7 L262.7 555.8 L266.0 555.7 L269.4 555.8 L272.9 555.7 L276.2 554.9 L278.8 554.8 L282.2 555.0 L284.8 555.7 L287.3 556.5 L289.9 556.8 L292.4 557.6 L295.0 558.0 L297.5 558.3 L300.1 558.1 L302.6 558.4 L305.1 558.1 L306.9 557.5 L310.2 557.4 L313.6 557.3 L317.1 557.1 L320.4 557.1 L323.8 556.9 L327.2 556.8 L330.6 556.9 L334.0 556.5 L336.5 556.2 L338.7 555.7 L340.5 556.5 L342.5 558.0 L345.1 558.3 L347.3 558.4 L349.6 557.6 L351.9 558.1 L354.4 558.0 L357.0 556.8 L359.5 554.7 L362.1 554.4 L364.6 553.7 L367.2 553.3 L369.7 553.6 L372.3 554.6 L374.8 555.0 L378.2 555.1 L381.6 554.9 L384.2 555.4 L386.5 555.2 L389.1 555.4 L391.6 556.0 L395.0 555.4 L397.5 555.8 L400.1 556.5 L402.6 556.2 L405.2 555.8 L407.8 556.3 L410.3 556.7 L413.7 557.0 L416.2 557.1 L418.8 556.8 L421.3 557.1 L423.9 556.3 L425.9 556.0 L428.2 556.7 L431.5 556.3 L434.9 556.1 L437.5 556.0 L440.9 555.7 L444.2 555.4 L447.7 555.3 L451.1 555.2 L453.6 555.4 L456.2 555.7 L458.7 555.9 L462.1 555.8 L465.5 555.8 L468.9 556.0 L471.4 557.1 L474.0 557.9 L476.5 558.6 L479.1 558.4 L481.6 559.7 L484.2 560.4 L486.7 560.4 L489.3 560.0 L491.8 558.6 L494.3 559.1 L496.9 560.2 L499.4 559.1 L502.1 558.9 L505.4 558.8 L508.0 558.6 L510.5 559.1 L513.1 558.4 L515.6 558.1 L518.2 558.1 L520.7 558.0 L523.3 557.1 L525.8 556.3 L528.4 555.5 L530.9 555.2 L533.5 555.4 L535.7 554.3 L537.7 555.4 L540.3 556.7 L542.8 556.0 L545.4 555.8 L547.9 556.3 L549.4 556.2 L552.0 556.2 L554.5 555.8 L557.1 555.5 L559.6 555.6 L562.2 556.8 L564.7 557.8 L566.4 558.0 L569.0 557.1 L571.5 557.0 L573.6 556.5 L575.8 557.3 L578.4 557.0 L580.9 556.8 L583.5 557.1 L586.0 556.8 L588.5 556.3 L591.1 555.8 L593.6 555.4 L596.2 555.5 L598.7 555.0 L601.3 555.4 L603.8 555.2 L607.2 555.7 L609.7 555.8 L613.2 555.4 L615.7 556.0 L618.3 557.1 L619.9 558.0 L622.5 558.1 L625.0 559.1 L627.5 559.9 L630.1 560.0 L631.8 559.4 L634.4 559.7 L636.1 558.8 L637.8 557.1 L639.5 556.3 L642.0 557.0 L644.6 557.1 L647.1 557.0 L649.6 557.3 L652.2 557.5 L654.7 557.1 L657.3 557.1 L659.8 556.5 L662.4 555.7 L664.6 554.1 L666.3 552.0 L667.6 550.0 L669.2 549.4 L670.9 550.5 L672.7 550.2 L674.8 549.2 L676.8 549.5 L679.4 550.4 L681.9 551.1 L684.5 552.0 L687.0 552.9 L689.6 554.1 L692.1 555.0 L694.7 555.5 L697.3 555.8 L699.8 556.0 L702.4 555.7 L704.9 556.0 L707.5 556.2 L710.0 556.5 L712.4 555.2 L714.1 555.0 L716.7 554.4 L718.3 554.2 L720.0 555.4 L722.6 555.6 L725.9 555.7 L729.4 555.5 L731.9 555.2 L734.5 555.0 L737.8 555.5 L740.4 555.7 L742.9 555.5 L745.5 555.1 L748.0 554.1 L750.6 553.7 L754.0 553.6 L756.6 553.5 L759.1 553.9 L761.7 554.5 L764.2 554.1 L766.8 553.7 L769.3 553.9 L771.8 553.3 L773.6 554.1 L775.6 553.4 L777.8 554.4 L779.5 554.1 L782.0 552.6 L784.6 552.4 L787.1 552.1 L789.7 551.8 L792.2 552.3 L794.8 552.4 L797.3 551.8 L799.8 551.2 L802.4 551.6 L804.9 552.0 L807.5 552.4 L810.0 552.6 L812.6 552.0 L815.1 551.6 L817.7 552.0 L820.2 551.3 L822.8 550.7 L825.3 550.2 L828.0 550.4 L830.5 549.2 L833.0 549.7 L835.6 550.5 L838.1 551.1 L840.7 550.7 L843.2 549.7 L845.8 548.9 L848.3 548.2 L850.9 547.9 L852.5 547.4 L855.0 548.6 L857.6 548.9 L860.2 548.2 L862.8 548.1 L865.3 548.7 L867.9 549.2 L870.4 549.5 L873.0 549.7 L875.3 548.7 L878.0 549.5 L880.5 549.2 L883.0 549.1 L885.6 549.4 L888.1 549.5 L890.7 549.7 L893.2 549.5 L895.8 549.7 L897.5 548.9 L900.1 548.2 L902.6 548.4 L905.1 548.5 L907.7 548.3 L910.2 548.1 L912.8 548.0 L915.3 548.1 L917.9 548.4 L920.4 549.2 L923.0 550.0 L925.5 549.9 L928.1 549.6 L931.4 549.7 L934.9 549.5 L937.4 549.7 L940.0 549.4" fill="none" stroke="#000" stroke-opacity=".3" stroke-width="3" stroke-linejoin="round"/>
<path d="M69.1 554.2 L72.6 554.3 L75.1 554.5 L77.6 553.3 L80.2 553.6 L82.7 554.0 L86.1 554.1 L88.6 554.0 L91.2 554.4 L93.7 555.2 L96.3 555.5 L99.7 555.5 L103.1 555.4 L105.7 554.7 L108.2 553.4 L110.7 552.4 L113.3 552.8 L115.3 552.3 L118.1 553.3 L120.9 553.3 L124.4 553.2 L127.7 553.1 L132.0 553.3 L135.4 554.1 L137.9 554.2 L140.5 553.6 L143.0 552.9 L145.3 553.7 L147.3 553.9 L150.7 553.7 L154.1 553.5 L157.5 553.3 L160.8 553.4 L164.3 553.2 L166.9 553.0 L169.4 553.7 L171.9 553.9 L174.1 555.1 L177.0 555.0 L179.6 555.5 L182.1 555.2 L184.7 554.7 L187.2 554.5 L189.8 554.1 L192.3 553.6 L194.9 553.1 L197.4 553.5 L200.8 553.6 L204.2 553.4 L207.6 553.7 L210.1 554.1 L212.7 553.6 L216.1 553.7 L219.5 553.9 L223.6 554.0 L226.9 553.8 L230.4 553.6 L232.9 553.7 L235.1 553.5 L237.1 555.1 L239.7 555.7 L243.1 555.2 L245.7 555.8 L249.0 555.9 L252.5 555.8 L255.9 555.5 L259.2 555.7 L262.7 555.8 L266.0 555.7 L269.4 555.8 L272.9 555.7 L276.2 554.9 L278.8 554.8 L282.2 555.0 L284.8 555.7 L287.3 556.5 L289.9 556.8 L292.4 557.6 L295.0 558.0 L297.5 558.3 L300.1 558.1 L302.6 558.4 L305.1 558.1 L306.9 557.5 L310.2 557.4 L313.6 557.3 L317.1 557.1 L320.4 557.1 L323.8 556.9 L327.2 556.8 L330.6 556.9 L334.0 556.5 L336.5 556.2 L338.7 555.7 L340.5 556.5 L342.5 558.0 L345.1 558.3 L347.3 558.4 L349.6 557.6 L351.9 558.1 L354.4 558.0 L357.0 556.8 L359.5 554.7 L362.1 554.4 L364.6 553.7 L367.2 553.3 L369.7 553.6 L372.3 554.6 L374.8 555.0 L378.2 555.1 L381.6 554.9 L384.2 555.4 L386.5 555.2 L389.1 555.4 L391.6 556.0 L395.0 555.4 L397.5 555.8 L400.1 556.5 L402.6 556.2 L405.2 555.8 L407.8 556.3 L410.3 556.7 L413.7 557.0 L416.2 557.1 L418.8 556.8 L421.3 557.1 L423.9 556.3 L425.9 556.0 L428.2 556.7 L431.5 556.3 L434.9 556.1 L437.5 556.0 L440.9 555.7 L444.2 555.4 L447.7 555.3 L451.1 555.2 L453.6 555.4 L456.2 555.7 L458.7 555.9 L462.1 555.8 L465.5 555.8 L468.9 556.0 L471.4 557.1 L474.0 557.9 L476.5 558.6 L479.1 558.4 L481.6 559.7 L484.2 560.4 L486.7 560.4 L489.3 560.0 L491.8 558.6 L494.3 559.1 L496.9 560.2 L499.4 559.1 L502.1 558.9 L505.4 558.8 L508.0 558.6 L510.5 559.1 L513.1 558.4 L515.6 558.1 L518.2 558.1 L520.7 558.0 L523.3 557.1 L525.8 556.3 L528.4 555.5 L530.9 555.2 L533.5 555.4 L535.7 554.3 L537.7 555.4 L540.3 556.7 L542.8 556.0 L545.4 555.8 L547.9 556.3 L549.4 556.2 L552.0 556.2 L554.5 555.8 L557.1 555.5 L559.6 555.6 L562.2 556.8 L564.7 557.8 L566.4 558.0 L569.0 557.1 L571.5 557.0 L573.6 556.5 L575.8 557.3 L578.4 557.0 L580.9 556.8 L583.5 557.1 L586.0 556.8 L588.5 556.3 L591.1 555.8 L593.6 555.4 L596.2 555.5 L598.7 555.0 L601.3 555.4 L603.8 555.2 L607.2 555.7 L609.7 555.8 L613.2 555.4 L615.7 556.0 L618.3 557.1 L619.9 558.0 L622.5 558.1 L625.0 559.1 L627.5 559.9 L630.1 560.0 L631.8 559.4 L634.4 559.7 L636.1 558.8 L637.8 557.1 L639.5 556.3 L642.0 557.0 L644.6 557.1 L647.1 557.0 L649.6 557.3 L652.2 557.5 L654.7 557.1 L657.3 557.1 L659.8 556.5 L662.4 555.7 L664.6 554.1 L666.3 552.0 L667.6 550.0 L669.2 549.4 L670.9 550.5 L672.7 550.2 L674.8 549.2 L676.8 549.5 L679.4 550.4 L681.9 551.1 L684.5 552.0 L687.0 552.9 L689.6 554.1 L692.1 555.0 L694.7 555.5 L697.3 555.8 L699.8 556.0 L702.4 555.7 L704.9 556.0 L707.5 556.2 L710.0 556.5 L712.4 555.2 L714.1 555.0 L716.7 554.4 L718.3 554.2 L720.0 555.4 L722.6 555.6 L725.9 555.7 L729.4 555.5 L731.9 555.2 L734.5 555.0 L737.8 555.5 L740.4 555.7 L742.9 555.5 L745.5 555.1 L748.0 554.1 L750.6 553.7 L754.0 553.6 L756.6 553.5 L759.1 553.9 L761.7 554.5 L764.2 554.1 L766.8 553.7 L769.3 553.9 L771.8 553.3 L773.6 554.1 L775.6 553.4 L777.8 554.4 L779.5 554.1 L782.0 552.6 L784.6 552.4 L787.1 552.1 L789.7 551.8 L792.2 552.3 L794.8 552.4 L797.3 551.8 L799.8 551.2 L802.4 551.6 L804.9 552.0 L807.5 552.4 L810.0 552.6 L812.6 552.0 L815.1 551.6 L817.7 552.0 L820.2 551.3 L822.8 550.7 L825.3 550.2 L828.0 550.4 L830.5 549.2 L833.0 549.7 L835.6 550.5 L838.1 551.1 L840.7 550.7 L843.2 549.7 L845.8 548.9 L848.3 548.2 L850.9 547.9 L852.5 547.4 L855.0 548.6 L857.6 548.9 L860.2 548.2 L862.8 548.1 L865.3 548.7 L867.9 549.2 L870.4 549.5 L873.0 549.7 L875.3 548.7 L878.0 549.5 L880.5 549.2 L883.0 549.1 L885.6 549.4 L888.1 549.5 L890.7 549.7 L893.2 549.5 L895.8 549.7 L897.5 548.9 L900.1 548.2 L902.6 548.4 L905.1 548.5 L907.7 548.3 L910.2 548.1 L912.8 548.0 L915.3 548.1 L917.9 548.4 L920.4 549.2 L923.0 550.0 L925.5 549.9 L928.1 549.6 L931.4 549.7 L934.9 549.5 L937.4 549.7 L940.0 549.4" fill="none" stroke="#ff33b8" stroke-width="1.5" stroke-linejoin="round"/>
<path d="M69.1 552.0 L72.6 551.9 L75.1 551.8 L77.6 550.2 L80.2 550.7 L82.7 550.8 L85.3 550.5 L87.5 551.5 L90.4 551.6 L92.6 552.4 L95.5 552.3 L98.8 552.1 L101.4 552.0 L103.4 552.4 L106.2 551.6 L109.0 550.5 L111.3 550.4 L114.2 550.8 L117.6 551.1 L120.9 551.1 L125.2 551.1 L128.6 550.9 L132.0 551.1 L136.2 551.5 L139.7 551.1 L143.0 550.8 L146.5 550.8 L149.8 551.1 L152.4 551.5 L154.4 550.5 L157.5 550.5 L160.0 550.3 L162.6 550.2 L165.1 550.5 L168.5 551.1 L171.9 550.7 L174.1 552.0 L177.0 552.3 L179.6 552.8 L182.1 552.3 L185.5 552.0 L189.0 551.8 L192.3 551.7 L194.9 551.5 L196.6 552.0 L199.9 551.9 L203.3 551.6 L206.8 551.5 L210.1 552.0 L212.7 551.6 L215.2 551.6 L217.8 551.2 L221.2 551.4 L223.6 551.4 L226.9 551.7 L230.4 551.4 L232.9 551.6 L235.1 550.0 L237.1 551.1 L239.7 551.8 L243.1 551.1 L245.7 552.1 L248.2 552.4 L251.6 552.6 L255.0 552.5 L258.4 553.2 L261.8 553.4 L263.5 553.7 L266.0 553.3 L269.4 553.6 L272.9 553.7 L276.2 553.3 L279.7 553.3 L282.2 553.3 L284.8 554.1 L288.1 555.0 L290.7 555.8 L293.2 555.0 L295.8 556.2 L298.3 556.0 L300.9 557.0 L303.4 557.4 L306.9 557.3 L310.2 557.0 L313.6 556.8 L316.1 556.2 L318.7 555.4 L322.1 554.9 L325.5 554.7 L328.9 554.6 L332.3 554.4 L335.7 554.2 L338.7 554.1 L340.8 554.7 L342.5 555.8 L344.6 557.0 L346.8 556.8 L348.9 555.7 L351.0 555.8 L353.5 555.5 L356.1 554.7 L358.6 553.4 L361.2 553.3 L363.7 553.6 L366.2 552.6 L368.8 552.4 L370.5 552.1 L373.1 553.1 L375.6 553.6 L378.2 553.2 L381.6 553.3 L384.2 553.2 L386.5 553.3 L389.9 553.3 L393.3 553.6 L395.9 553.7 L398.4 553.6 L401.0 554.2 L403.5 553.7 L406.9 553.9 L410.3 554.3 L413.7 554.7 L417.1 554.6 L420.5 554.5 L423.1 554.1 L425.6 553.6 L429.0 553.9 L432.3 554.1 L435.8 553.7 L439.2 553.8 L441.7 553.6 L443.4 553.3 L446.0 553.7 L448.5 553.4 L451.9 553.7 L455.3 553.9 L457.9 554.3 L461.3 554.1 L464.6 554.2 L468.1 554.3 L470.6 554.2 L472.4 554.9 L474.9 554.4 L477.4 555.0 L480.0 554.9 L482.5 556.2 L485.1 557.5 L486.7 558.0 L489.3 557.5 L491.8 556.8 L494.3 556.3 L496.9 557.3 L498.6 555.8 L502.1 555.7 L505.4 555.4 L508.0 555.2 L510.5 555.0 L513.1 554.4 L515.6 554.3 L518.2 554.5 L520.7 554.4 L523.3 554.2 L525.8 553.9 L528.4 553.3 L530.6 552.1 L532.6 551.8 L535.2 551.9 L537.7 552.6 L539.5 553.1 L542.0 552.3 L544.6 552.1 L547.1 552.6 L549.4 552.8 L552.8 552.4 L556.3 552.4 L559.6 552.3 L562.2 552.9 L564.7 553.9 L566.4 554.1 L569.0 553.6 L570.7 553.9 L573.3 552.9 L574.9 553.7 L577.4 553.9 L580.0 553.4 L582.5 553.3 L585.1 553.6 L588.5 553.3 L591.9 553.1 L595.3 552.9 L598.7 552.5 L602.1 552.8 L605.6 553.1 L608.9 553.3 L612.3 553.2 L614.8 553.3 L617.4 553.9 L619.9 554.4 L621.6 554.9 L624.2 556.0 L626.7 556.3 L629.3 556.2 L631.8 555.8 L634.4 556.2 L636.1 555.4 L637.8 554.4 L639.5 554.1 L642.0 554.6 L644.6 554.9 L648.0 555.0 L651.4 555.1 L654.7 554.8 L658.2 554.6 L660.7 553.9 L663.3 553.3 L665.0 551.0 L666.3 548.6 L667.6 548.1 L669.2 548.7 L670.9 549.4 L672.7 548.7 L674.8 547.7 L676.8 547.9 L679.4 548.6 L681.9 549.2 L684.5 549.9 L687.0 550.2 L689.6 551.0 L692.1 552.3 L694.7 553.4 L697.3 553.7 L699.8 553.3 L702.4 553.4 L704.9 553.6 L707.5 553.3 L710.0 553.9 L712.4 552.6 L714.1 552.3 L716.7 551.6 L718.3 551.9 L720.0 552.9 L722.6 553.4 L725.9 553.3 L729.4 553.4 L732.7 553.3 L735.3 553.1 L737.8 553.6 L740.4 553.7 L742.9 553.5 L745.5 553.3 L748.0 552.4 L750.6 552.3 L753.1 552.0 L756.6 552.2 L759.1 552.6 L761.7 552.8 L764.2 552.3 L766.8 551.8 L769.3 551.6 L771.8 551.3 L774.4 552.4 L776.9 552.3 L779.5 553.3 L781.2 552.1 L783.8 551.5 L786.3 550.8 L788.9 550.5 L790.9 550.7 L793.0 551.4 L795.7 550.8 L798.2 549.7 L799.8 549.5 L802.4 550.0 L804.9 550.2 L808.4 550.3 L811.8 550.4 L814.3 550.0 L816.9 550.2 L819.4 550.8 L821.9 549.7 L824.5 549.4 L827.0 548.6 L829.6 547.9 L832.1 548.2 L834.7 548.9 L837.2 549.5 L839.5 549.7 L842.3 548.9 L844.9 548.1 L847.4 547.3 L850.0 547.0 L852.5 546.3 L855.0 547.1 L857.6 547.4 L860.2 547.3 L862.8 547.1 L865.3 547.6 L867.9 548.2 L870.4 548.7 L873.0 548.4 L875.3 548.1 L878.0 548.6 L880.5 548.2 L883.0 547.8 L885.6 547.6 L888.1 547.8 L890.7 547.5 L893.2 548.1 L895.0 548.7 L897.5 548.0 L900.1 548.1 L902.6 548.3 L905.1 548.2 L907.7 548.1 L910.2 547.9 L912.8 548.1 L915.3 547.9 L917.9 547.9 L920.4 548.6 L923.0 549.1 L925.5 549.0 L928.1 548.7 L931.4 548.7 L934.9 548.7 L937.4 548.8 L940.0 548.6" fill="none" stroke="#000" stroke-opacity=".3" stroke-width="3" stroke-linejoin="round"/>
<path d="M69.1 552.0 L72.6 551.9 L75.1 551.8 L77.6 550.2 L80.2 550.7 L82.7 550.8 L85.3 550.5 L87.5 551.5 L90.4 551.6 L92.6 552.4 L95.5 552.3 L98.8 552.1 L101.4 552.0 L103.4 552.4 L106.2 551.6 L109.0 550.5 L111.3 550.4 L114.2 550.8 L117.6 551.1 L120.9 551.1 L125.2 551.1 L128.6 550.9 L132.0 551.1 L136.2 551.5 L139.7 551.1 L143.0 550.8 L146.5 550.8 L149.8 551.1 L152.4 551.5 L154.4 550.5 L157.5 550.5 L160.0 550.3 L162.6 550.2 L165.1 550.5 L168.5 551.1 L171.9 550.7 L174.1 552.0 L177.0 552.3 L179.6 552.8 L182.1 552.3 L185.5 552.0 L189.0 551.8 L192.3 551.7 L194.9 551.5 L196.6 552.0 L199.9 551.9 L203.3 551.6 L206.8 551.5 L210.1 552.0 L212.7 551.6 L215.2 551.6 L217.8 551.2 L221.2 551.4 L223.6 551.4 L226.9 551.7 L230.4 551.4 L232.9 551.6 L235.1 550.0 L237.1 551.1 L239.7 551.8 L243.1 551.1 L245.7 552.1 L248.2 552.4 L251.6 552.6 L255.0 552.5 L258.4 553.2 L261.8 553.4 L263.5 553.7 L266.0 553.3 L269.4 553.6 L272.9 553.7 L276.2 553.3 L279.7 553.3 L282.2 553.3 L284.8 554.1 L288.1 555.0 L290.7 555.8 L293.2 555.0 L295.8 556.2 L298.3 556.0 L300.9 557.0 L303.4 557.4 L306.9 557.3 L310.2 557.0 L313.6 556.8 L316.1 556.2 L318.7 555.4 L322.1 554.9 L325.5 554.7 L328.9 554.6 L332.3 554.4 L335.7 554.2 L338.7 554.1 L340.8 554.7 L342.5 555.8 L344.6 557.0 L346.8 556.8 L348.9 555.7 L351.0 555.8 L353.5 555.5 L356.1 554.7 L358.6 553.4 L361.2 553.3 L363.7 553.6 L366.2 552.6 L368.8 552.4 L370.5 552.1 L373.1 553.1 L375.6 553.6 L378.2 553.2 L381.6 553.3 L384.2 553.2 L386.5 553.3 L389.9 553.3 L393.3 553.6 L395.9 553.7 L398.4 553.6 L401.0 554.2 L403.5 553.7 L406.9 553.9 L410.3 554.3 L413.7 554.7 L417.1 554.6 L420.5 554.5 L423.1 554.1 L425.6 553.6 L429.0 553.9 L432.3 554.1 L435.8 553.7 L439.2 553.8 L441.7 553.6 L443.4 553.3 L446.0 553.7 L448.5 553.4 L451.9 553.7 L455.3 553.9 L457.9 554.3 L461.3 554.1 L464.6 554.2 L468.1 554.3 L470.6 554.2 L472.4 554.9 L474.9 554.4 L477.4 555.0 L480.0 554.9 L482.5 556.2 L485.1 557.5 L486.7 558.0 L489.3 557.5 L491.8 556.8 L494.3 556.3 L496.9 557.3 L498.6 555.8 L502.1 555.7 L505.4 555.4 L508.0 555.2 L510.5 555.0 L513.1 554.4 L515.6 554.3 L518.2 554.5 L520.7 554.4 L523.3 554.2 L525.8 553.9 L528.4 553.3 L530.6 552.1 L532.6 551.8 L535.2 551.9 L537.7 552.6 L539.5 553.1 L542.0 552.3 L544.6 552.1 L547.1 552.6 L549.4 552.8 L552.8 552.4 L556.3 552.4 L559.6 552.3 L562.2 552.9 L564.7 553.9 L566.4 554.1 L569.0 553.6 L570.7 553.9 L573.3 552.9 L574.9 553.7 L577.4 553.9 L580.0 553.4 L582.5 553.3 L585.1 553.6 L588.5 553.3 L591.9 553.1 L595.3 552.9 L598.7 552.5 L602.1 552.8 L605.6 553.1 L608.9 553.3 L612.3 553.2 L614.8 553.3 L617.4 553.9 L619.9 554.4 L621.6 554.9 L624.2 556.0 L626.7 556.3 L629.3 556.2 L631.8 555.8 L634.4 556.2 L636.1 555.4 L637.8 554.4 L639.5 554.1 L642.0 554.6 L644.6 554.9 L648.0 555.0 L651.4 555.1 L654.7 554.8 L658.2 554.6 L660.7 553.9 L663.3 553.3 L665.0 551.0 L666.3 548.6 L667.6 548.1 L669.2 548.7 L670.9 549.4 L672.7 548.7 L674.8 547.7 L676.8 547.9 L679.4 548.6 L681.9 549.2 L684.5 549.9 L687.0 550.2 L689.6 551.0 L692.1 552.3 L694.7 553.4 L697.3 553.7 L699.8 553.3 L702.4 553.4 L704.9 553.6 L707.5 553.3 L710.0 553.9 L712.4 552.6 L714.1 552.3 L716.7 551.6 L718.3 551.9 L720.0 552.9 L722.6 553.4 L725.9 553.3 L729.4 553.4 L732.7 553.3 L735.3 553.1 L737.8 553.6 L740.4 553.7 L742.9 553.5 L745.5 553.3 L748.0 552.4 L750.6 552.3 L753.1 552.0 L756.6 552.2 L759.1 552.6 L761.7 552.8 L764.2 552.3 L766.8 551.8 L769.3 551.6 L771.8 551.3 L774.4 552.4 L776.9 552.3 L779.5 553.3 L781.2 552.1 L783.8 551.5 L786.3 550.8 L788.9 550.5 L790.9 550.7 L793.0 551.4 L795.7 550.8 L798.2 549.7 L799.8 549.5 L802.4 550.0 L804.9 550.2 L808.4 550.3 L811.8 550.4 L814.3 550.0 L816.9 550.2 L819.4 550.8 L821.9 549.7 L824.5 549.4 L827.0 548.6 L829.6 547.9 L832.1 548.2 L834.7 548.9 L837.2 549.5 L839.5 549.7 L842.3 548.9 L844.9 548.1 L847.4 547.3 L850.0 547.0 L852.5 546.3 L855.0 547.1 L857.6 547.4 L860.2 547.3 L862.8 547.1 L865.3 547.6 L867.9 548.2 L870.4 548.7 L873.0 548.4 L875.3 548.1 L878.0 548.6 L880.5 548.2 L883.0 547.8 L885.6 547.6 L888.1 547.8 L890.7 547.5 L893.2 548.1 L895.0 548.7 L897.5 548.0 L900.1 548.1 L902.6 548.3 L905.1 548.2 L907.7 548.1 L910.2 547.9 L912.8 548.1 L915.3 547.9 L917.9 547.9 L920.4 548.6 L923.0 549.1 L925.5 549.0 L928.1 548.7 L931.4 548.7 L934.9 548.7 L937.4 548.8 L940.0 548.6" fill="none" stroke="#4cf888" stroke-width="1.5" stroke-linejoin="round"/>
<path d="M69.1 546.4 L73.4 546.1 L76.7 545.4 L79.4 545.2 L81.9 545.7 L85.3 545.2 L87.8 545.1 L90.9 545.4 L93.2 546.1 L96.3 546.3 L98.8 546.1 L102.3 546.2 L105.1 547.1 L107.9 547.7 L110.7 547.3 L113.3 547.1 L115.3 546.7 L117.6 547.8 L120.1 547.4 L122.7 547.1 L126.0 547.1 L129.5 547.5 L132.8 548.0 L136.2 548.5 L138.7 548.2 L141.3 548.7 L144.8 548.2 L148.1 547.9 L150.7 548.0 L153.7 548.2 L155.8 547.0 L158.3 546.5 L160.8 547.0 L163.4 547.3 L166.9 547.1 L169.4 547.4 L171.9 547.3 L174.1 548.4 L177.0 547.8 L179.6 547.9 L182.1 548.1 L184.4 547.1 L187.2 547.3 L190.6 547.1 L194.9 546.8 L198.2 546.5 L201.7 546.4 L205.0 546.1 L208.5 546.0 L211.9 546.1 L214.4 545.9 L217.8 545.8 L220.3 545.7 L223.6 546.1 L226.9 546.3 L230.4 546.1 L232.9 547.0 L234.6 548.4 L237.1 548.7 L240.6 548.7 L242.6 548.1 L244.9 548.6 L248.2 548.7 L250.8 548.6 L252.1 546.1 L254.1 545.9 L256.7 546.4 L260.1 546.1 L262.7 546.0 L265.2 546.4 L267.8 546.1 L270.3 546.1 L272.6 547.8 L274.6 548.1 L278.0 547.8 L281.3 548.0 L283.9 548.2 L286.1 548.7 L288.1 547.9 L290.7 547.7 L293.2 548.1 L295.8 548.3 L298.3 548.1 L301.7 548.6 L305.1 549.2 L308.5 549.7 L312.0 549.1 L315.3 548.7 L318.7 548.2 L322.1 548.1 L325.5 548.4 L328.9 548.9 L332.3 548.8 L335.7 549.1 L339.2 549.4 L341.7 549.1 L345.1 549.9 L347.6 549.5 L349.3 548.7 L351.9 549.2 L354.4 548.2 L357.8 547.6 L361.2 547.3 L364.6 546.9 L368.0 547.0 L371.4 546.9 L374.8 546.5 L378.2 546.4 L381.6 546.3 L384.2 545.8 L386.5 545.7 L389.9 546.1 L393.3 546.1 L395.9 546.4 L398.4 546.3 L401.0 546.8 L403.5 546.5 L406.9 546.3 L410.3 545.7 L413.7 546.0 L417.1 545.9 L420.5 546.1 L423.1 546.4 L426.4 546.1 L429.8 545.9 L432.3 545.8 L434.9 546.1 L437.5 545.9 L440.9 545.2 L443.4 545.2 L446.0 545.8 L448.5 546.1 L451.1 546.5 L453.6 547.0 L456.2 546.8 L458.7 547.3 L461.3 547.8 L463.8 547.8 L466.3 547.4 L468.9 547.3 L471.4 547.1 L474.0 547.8 L476.5 548.4 L479.1 548.1 L481.6 548.6 L484.2 549.2 L486.7 549.8 L489.3 549.7 L491.8 549.9 L494.3 549.4 L496.9 550.5 L498.6 549.2 L501.2 549.1 L503.7 548.1 L506.3 547.8 L508.8 547.4 L511.4 547.0 L513.9 546.9 L517.4 547.1 L519.9 546.8 L522.5 546.7 L525.0 546.4 L527.5 545.3 L530.1 545.0 L532.6 546.0 L535.2 547.0 L537.7 546.4 L541.1 546.3 L543.6 546.5 L546.2 547.8 L549.4 548.2 L552.8 548.1 L556.3 547.6 L558.8 547.3 L560.4 547.1 L563.0 547.9 L565.5 547.4 L567.8 547.1 L570.7 547.7 L574.1 547.4 L577.4 547.3 L580.0 547.2 L582.5 547.7 L586.0 547.8 L588.5 547.6 L591.1 547.8 L593.9 548.3 L597.0 547.9 L600.5 547.6 L603.8 547.4 L608.1 547.4 L611.5 547.5 L614.8 547.8 L618.3 548.2 L621.6 548.7 L624.2 548.9 L626.7 548.2 L629.3 547.6 L631.8 547.3 L634.4 547.9 L637.8 547.8 L641.2 547.6 L643.7 547.8 L647.1 548.2 L649.6 548.1 L652.2 548.7 L654.7 549.1 L657.3 548.7 L659.8 548.1 L662.4 548.2 L665.0 547.8 L667.6 547.0 L670.1 546.7 L672.7 547.1 L675.2 546.7 L677.8 547.0 L680.3 546.8 L682.8 547.1 L685.4 547.4 L688.7 547.8 L692.1 548.1 L695.6 548.6 L698.1 548.9 L700.7 548.7 L703.2 548.9 L705.8 548.7 L708.3 548.6 L710.8 549.1 L712.4 549.2 L714.9 548.6 L717.5 547.9 L719.2 548.0 L721.7 548.9 L724.3 549.1 L726.8 549.4 L729.4 549.8 L731.9 549.5 L734.5 549.2 L737.8 549.1 L740.4 549.7 L742.9 549.5 L745.5 549.8 L748.0 549.4 L750.6 549.0 L753.1 548.9 L756.6 549.0 L759.1 549.2 L761.7 549.4 L764.2 548.9 L766.8 548.4 L769.3 548.1 L771.8 547.9 L774.4 548.1 L776.9 548.5 L779.5 548.8 L782.0 548.4 L784.6 547.6 L786.3 546.6 L787.9 546.8 L789.7 547.4 L791.4 548.2 L793.5 548.4 L795.7 547.8 L798.2 546.6 L800.8 546.1 L804.1 546.0 L806.7 545.5 L809.2 545.3 L811.8 545.7 L814.3 546.0 L816.9 547.3 L819.4 547.4 L821.9 547.0 L824.5 546.1 L827.0 545.7 L829.6 545.4 L832.1 545.8 L834.7 546.1 L837.2 547.0 L839.5 547.8 L841.5 546.8 L844.0 545.7 L846.6 544.5 L849.1 544.5 L850.9 544.7 L853.0 544.4 L855.0 545.1 L857.6 544.4 L860.2 544.5 L862.8 545.2 L865.3 545.8 L867.9 546.1 L870.4 546.4 L873.0 546.6 L875.3 546.1 L878.0 545.8 L880.5 545.7 L883.0 545.2 L885.2 544.5 L887.3 544.8 L889.0 545.0 L891.0 544.8 L893.2 546.1 L895.8 547.3 L898.3 547.6 L900.9 547.8 L903.4 547.8 L906.0 548.1 L908.5 548.5 L911.1 548.6 L913.6 547.8 L916.1 547.3 L918.7 547.4 L921.2 547.6 L923.8 547.1 L926.3 546.9 L929.8 546.7 L933.1 546.5 L935.7 546.6 L938.2 546.5 L940.0 546.1" fill="none" stroke="#000" stroke-opacity=".3" stroke-width="3" stroke-linejoin="round"/>
<path d="M69.1 546.4 L73.4 546.1 L76.7 545.4 L79.4 545.2 L81.9 545.7 L85.3 545.2 L87.8 545.1 L90.9 545.4 L93.2 546.1 L96.3 546.3 L98.8 546.1 L102.3 546.2 L105.1 547.1 L107.9 547.7 L110.7 547.3 L113.3 547.1 L115.3 546.7 L117.6 547.8 L120.1 547.4 L122.7 547.1 L126.0 547.1 L129.5 547.5 L132.8 548.0 L136.2 548.5 L138.7 548.2 L141.3 548.7 L144.8 548.2 L148.1 547.9 L150.7 548.0 L153.7 548.2 L155.8 547.0 L158.3 546.5 L160.8 547.0 L163.4 547.3 L166.9 547.1 L169.4 547.4 L171.9 547.3 L174.1 548.4 L177.0 547.8 L179.6 547.9 L182.1 548.1 L184.4 547.1 L187.2 547.3 L190.6 547.1 L194.9 546.8 L198.2 546.5 L201.7 546.4 L205.0 546.1 L208.5 546.0 L211.9 546.1 L214.4 545.9 L217.8 545.8 L220.3 545.7 L223.6 546.1 L226.9 546.3 L230.4 546.1 L232.9 547.0 L234.6 548.4 L237.1 548.7 L240.6 548.7 L242.6 548.1 L244.9 548.6 L248.2 548.7 L250.8 548.6 L252.1 546.1 L254.1 545.9 L256.7 546.4 L260.1 546.1 L262.7 546.0 L265.2 546.4 L267.8 546.1 L270.3 546.1 L272.6 547.8 L274.6 548.1 L278.0 547.8 L281.3 548.0 L283.9 548.2 L286.1 548.7 L288.1 547.9 L290.7 547.7 L293.2 548.1 L295.8 548.3 L298.3 548.1 L301.7 548.6 L305.1 549.2 L308.5 549.7 L312.0 549.1 L315.3 548.7 L318.7 548.2 L322.1 548.1 L325.5 548.4 L328.9 548.9 L332.3 548.8 L335.7 549.1 L339.2 549.4 L341.7 549.1 L345.1 549.9 L347.6 549.5 L349.3 548.7 L351.9 549.2 L354.4 548.2 L357.8 547.6 L361.2 547.3 L364.6 546.9 L368.0 547.0 L371.4 546.9 L374.8 546.5 L378.2 546.4 L381.6 546.3 L384.2 545.8 L386.5 545.7 L389.9 546.1 L393.3 546.1 L395.9 546.4 L398.4 546.3 L401.0 546.8 L403.5 546.5 L406.9 546.3 L410.3 545.7 L413.7 546.0 L417.1 545.9 L420.5 546.1 L423.1 546.4 L426.4 546.1 L429.8 545.9 L432.3 545.8 L434.9 546.1 L437.5 545.9 L440.9 545.2 L443.4 545.2 L446.0 545.8 L448.5 546.1 L451.1 546.5 L453.6 547.0 L456.2 546.8 L458.7 547.3 L461.3 547.8 L463.8 547.8 L466.3 547.4 L468.9 547.3 L471.4 547.1 L474.0 547.8 L476.5 548.4 L479.1 548.1 L481.6 548.6 L484.2 549.2 L486.7 549.8 L489.3 549.7 L491.8 549.9 L494.3 549.4 L496.9 550.5 L498.6 549.2 L501.2 549.1 L503.7 548.1 L506.3 547.8 L508.8 547.4 L511.4 547.0 L513.9 546.9 L517.4 547.1 L519.9 546.8 L522.5 546.7 L525.0 546.4 L527.5 545.3 L530.1 545.0 L532.6 546.0 L535.2 547.0 L537.7 546.4 L541.1 546.3 L543.6 546.5 L546.2 547.8 L549.4 548.2 L552.8 548.1 L556.3 547.6 L558.8 547.3 L560.4 547.1 L563.0 547.9 L565.5 547.4 L567.8 547.1 L570.7 547.7 L574.1 547.4 L577.4 547.3 L580.0 547.2 L582.5 547.7 L586.0 547.8 L588.5 547.6 L591.1 547.8 L593.9 548.3 L597.0 547.9 L600.5 547.6 L603.8 547.4 L608.1 547.4 L611.5 547.5 L614.8 547.8 L618.3 548.2 L621.6 548.7 L624.2 548.9 L626.7 548.2 L629.3 547.6 L631.8 547.3 L634.4 547.9 L637.8 547.8 L641.2 547.6 L643.7 547.8 L647.1 548.2 L649.6 548.1 L652.2 548.7 L654.7 549.1 L657.3 548.7 L659.8 548.1 L662.4 548.2 L665.0 547.8 L667.6 547.0 L670.1 546.7 L672.7 547.1 L675.2 546.7 L677.8 547.0 L680.3 546.8 L682.8 547.1 L685.4 547.4 L688.7 547.8 L692.1 548.1 L695.6 548.6 L698.1 548.9 L700.7 548.7 L703.2 548.9 L705.8 548.7 L708.3 548.6 L710.8 549.1 L712.4 549.2 L714.9 548.6 L717.5 547.9 L719.2 548.0 L721.7 548.9 L724.3 549.1 L726.8 549.4 L729.4 549.8 L731.9 549.5 L734.5 549.2 L737.8 549.1 L740.4 549.7 L742.9 549.5 L745.5 549.8 L748.0 549.4 L750.6 549.0 L753.1 548.9 L756.6 549.0 L759.1 549.2 L761.7 549.4 L764.2 548.9 L766.8 548.4 L769.3 548.1 L771.8 547.9 L774.4 548.1 L776.9 548.5 L779.5 548.8 L782.0 548.4 L784.6 547.6 L786.3 546.6 L787.9 546.8 L789.7 547.4 L791.4 548.2 L793.5 548.4 L795.7 547.8 L798.2 546.6 L800.8 546.1 L804.1 546.0 L806.7 545.5 L809.2 545.3 L811.8 545.7 L814.3 546.0 L816.9 547.3 L819.4 547.4 L821.9 547.0 L824.5 546.1 L827.0 545.7 L829.6 545.4 L832.1 545.8 L834.7 546.1 L837.2 547.0 L839.5 547.8 L841.5 546.8 L844.0 545.7 L846.6 544.5 L849.1 544.5 L850.9 544.7 L853.0 544.4 L855.0 545.1 L857.6 544.4 L860.2 544.5 L862.8 545.2 L865.3 545.8 L867.9 546.1 L870.4 546.4 L873.0 546.6 L875.3 546.1 L878.0 545.8 L880.5 545.7 L883.0 545.2 L885.2 544.5 L887.3 544.8 L889.0 545.0 L891.0 544.8 L893.2 546.1 L895.8 547.3 L898.3 547.6 L900.9 547.8 L903.4 547.8 L906.0 548.1 L908.5 548.5 L911.1 548.6 L913.6 547.8 L916.1 547.3 L918.7 547.4 L921.2 547.6 L923.8 547.1 L926.3 546.9 L929.8 546.7 L933.1 546.5 L935.7 546.6 L938.2 546.5 L940.0 546.1" fill="none" stroke="#a05ae6" stroke-width="1.5" stroke-linejoin="round"/>
</g>
<g stroke="#f4f4f4" stroke-width="1.6">
<path d="M130.3 540 V595.5 M252.5 540 V595.5 M374.7 540 V595.5 M496.9 540 V595.5 M619.1 540 V595.5 M741.3 540 V595.5 M863.5 540 V595.5"/>
</g>
<rect x="70" y="540" width="871.5" height="55.5" fill="none" stroke="#7d8da3" stroke-width="1"/>
<g class="nv">
<text x="136.1" y="589.6">1. Apr</text><text x="258.3" y="589.6">3. Apr</text><text x="380.5" y="589.6">5. Apr</text><text x="502.7" y="589.6">7. Apr</text><text x="624.9" y="589.6">9. Apr</text><text x="747.1" y="589.6">11. Apr</text><text x="869.3" y="589.6">13. Apr</text>
</g>
<g>
<rect x="64.6" y="557" width="11" height="20.5" fill="#9db4d6" fill-opacity=".6" stroke="#a9c3e6" stroke-opacity=".85" stroke-width="1"/>
<path d="M68.5 562 v10.5 M71.6 562 v10.5" stroke="#b5d2f5" stroke-opacity=".85" stroke-width="1" fill="none"/>
<rect x="935.4" y="557" width="11" height="20.5" fill="#9db4d6" fill-opacity=".6" stroke="#a9c3e6" stroke-opacity=".85" stroke-width="1"/>
<path d="M939.3 562 v10.5 M942.4 562 v10.5" stroke="#b5d2f5" stroke-opacity=".85" stroke-width="1" fill="none"/>
</g>
<!-- legend -->
<g stroke-width="3" stroke-linecap="round">
<path d="M32 627.5 h11" stroke="#e6e6e6"/><path d="M148.5 627.5 h11" stroke="#e6e6e6"/><path d="M265 627.5 h11" stroke="#e6e6e6"/><path d="M381.5 627.5 h11" stroke="#ef3a5b"/><path d="M498 627.5 h11" stroke="#e6e6e6"/><path d="M614.5 627.5 h11" stroke="#e6e6e6"/><path d="M731 627.5 h11" stroke="#84e9f9"/>
<path d="M32 648 h11" stroke="#ff33b8"/><path d="M148.5 648 h11" stroke="#4cf888"/><path d="M265 648 h11" stroke="#a05ae6"/>
</g>
<g class="lg" stroke="#000" stroke-width="2.5" stroke-linejoin="round" stroke-opacity=".8" fill="#000">
<text x="51" y="633">ATM 1</text><text x="167.5" y="633">ATM 2</text><text x="284" y="633">ATM 3</text><text x="400.5" y="633">ATM 7</text><text x="517" y="633">ATM 14</text><text x="633.5" y="633">ATM 21</text><text x="750" y="633">ATM 30</text>
<text x="51" y="653.5">ATM 60</text><text x="167.5" y="653.5">ATM 90</text><text x="284" y="653.5">ATM 180</text>
</g>
<g class="lg">
<text x="51" y="633" fill="#ececec">ATM 1</text><text x="167.5" y="633" fill="#ececec">ATM 2</text><text x="284" y="633" fill="#ececec">ATM 3</text><text x="400.5" y="633" fill="#858585">ATM 7</text><text x="517" y="633" fill="#ececec">ATM 14</text><text x="633.5" y="633" fill="#ececec">ATM 21</text><text x="750" y="633" fill="#858585">ATM 30</text>
<text x="51" y="653.5" fill="#858585">ATM 60</text><text x="167.5" y="653.5" fill="#858585">ATM 90</text><text x="284" y="653.5" fill="#858585">ATM 180</text>
</g>
<text x="941.5" y="678.7" text-anchor="end" style="font-family:'DejaVu Sans','Liberation Sans',sans-serif;font-size:12.3px;letter-spacing:-0.27px;fill:#b8b8b8;stroke:#b8b8b8;stroke-width:.3px">Amberdata, (amberdata.io)</text>
<!-- bottom bar -->
<g stroke="#3b3b3b" stroke-width="2" fill="none">
<path d="M6 686 H955 M324 686 V717 M643 686 V717"/>
</g>
<!-- camera -->
<g fill="none" stroke="#000" stroke-opacity=".45" stroke-width="4" stroke-linejoin="round"><path d="M474.2 698.3 h2.8 l2 -2.6 h5 l2 2.6 h2.8 a1.6 1.6 0 0 1 1.6 1.6 v8.5 a1.6 1.6 0 0 1 -1.6 1.6 h-14.6 a1.6 1.6 0 0 1 -1.6 -1.6 v-8.5 a1.6 1.6 0 0 1 1.6 -1.6 z"/></g>
<g fill="none" stroke="#e8661e" stroke-width="1.7" stroke-linejoin="round">
<path d="M474.2 698.3 h2.8 l2 -2.6 h5 l2 2.6 h2.8 a1.6 1.6 0 0 1 1.6 1.6 v8.5 a1.6 1.6 0 0 1 -1.6 1.6 h-14.6 a1.6 1.6 0 0 1 -1.6 -1.6 v-8.5 a1.6 1.6 0 0 1 1.6 -1.6 z"/>
<circle cx="481.3" cy="703.8" r="3.9"/>
</g>
<!-- download -->
<g fill="none" stroke="#a8a8a8" stroke-width="1.5" stroke-linecap="round" stroke-linejoin="round">
<path d="M800 695 v11.5 M795 702 l5 5 l5 -5 M791.8 707.5 v2.5 a1.5 1.5 0 0 0 1.5 1.5 h13.4 a1.5 1.5 0 0 0 1.5 -1.5 v-2.5"/>
</g>
<path d="M943 713 h7.5 v-7.5" fill="none" stroke="#a8a8a8" stroke-width="2"/>
</svg>
</body></html>
